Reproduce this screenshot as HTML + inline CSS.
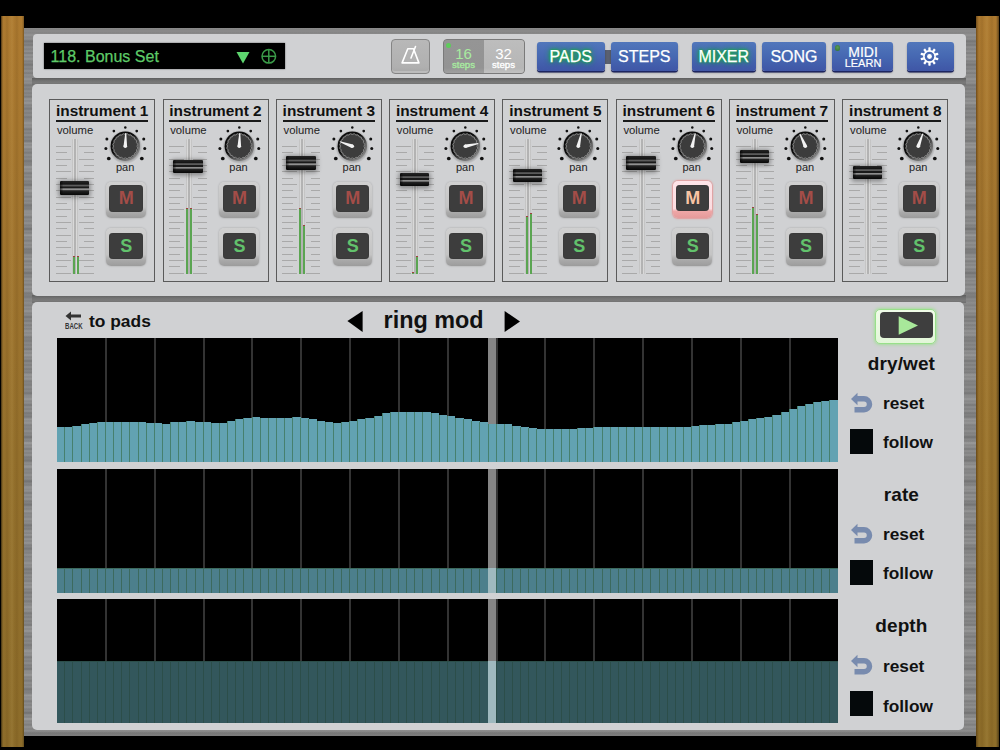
<!DOCTYPE html><html><head><meta charset="utf-8"><style>
*{margin:0;padding:0;box-sizing:border-box}
html,body{width:1000px;height:750px;overflow:hidden;background:#000}
body{position:relative;font-family:"Liberation Sans",sans-serif}
.a{position:absolute}
.wood{background:
 linear-gradient(90deg, rgba(0,0,0,.55) 0px, rgba(0,0,0,0) 2px, rgba(0,0,0,0) 4px, rgba(80,50,10,.12) 6px, rgba(0,0,0,0) 8px, rgba(255,230,160,.08) 11px, rgba(0,0,0,0) 13px, rgba(80,50,10,.12) 16px, rgba(0,0,0,0) 18px, rgba(0,0,0,0) 21px, rgba(0,0,0,.3) 23px),
 linear-gradient(180deg,#ad7a30 0%,#a0742e 30%,#94702c 60%,#8c6c2a 100%);}
.woodr{background:
 linear-gradient(90deg, rgba(40,20,0,.45) 0px, rgba(40,20,0,.2) 1.5px, rgba(0,0,0,0) 3px, rgba(80,50,10,.12) 6px, rgba(0,0,0,0) 8px, rgba(255,230,160,.08) 11px, rgba(0,0,0,0) 13px, rgba(80,50,10,.12) 16px, rgba(0,0,0,0) 18px, rgba(0,0,0,0) 20px, rgba(0,0,0,.45) 23px),
 linear-gradient(180deg,#ad7a30 0%,#a0742e 30%,#98722c 60%,#8e6e2a 100%);}
.metal{background:
 repeating-linear-gradient(180deg, rgba(0,0,0,0) 0px, rgba(0,0,0,.07) 1px, rgba(0,0,0,0) 2px, rgba(255,255,255,.05) 3px, rgba(0,0,0,0) 4px),
 repeating-linear-gradient(180deg, rgba(0,0,0,0) 0px, rgba(0,0,0,.07) 3px, rgba(0,0,0,0) 5px, rgba(255,255,255,.05) 9px, rgba(0,0,0,0) 11px),
 repeating-linear-gradient(180deg, rgba(255,255,255,.05) 0px, rgba(0,0,0,0) 8px, rgba(0,0,0,.08) 17px, rgba(0,0,0,0) 23px),#8a8a8a}
.pnl{background:#d0d1d3;border-radius:5px}
.box{border:1.5px solid #5a5a5a;}
.ttl{font-weight:bold;font-size:15px;color:#111;text-align:center;white-space:nowrap}
.uline{background:#1a1a1a;height:2.2px}
.sm{font-size:11px;color:#222;white-space:nowrap}
.tick{background:#a9a9a9;height:1.3px}
.btnb{border-radius:5px;background:linear-gradient(180deg,#d0d0d0,#c4c4c4 70%,#a9a9a9 85%,#9c9c9c);box-shadow:0 0 2px rgba(0,0,0,.25)}
.btnf{border-radius:4px;background:#3d3d3d;box-shadow:inset 0 0 1px #222;font-weight:bold;font-size:18px;text-align:center}
.blue{border-radius:3px;font-size:16px !important;-webkit-text-stroke:.25px #fff;background:linear-gradient(180deg,#5177bb 0%,#4668b2 50%,#3f56a6 100%);box-shadow:0 1.5px 0 #1d2560, 0 2px 2px rgba(0,0,0,.3);color:#fff;text-align:center;font-size:15px}
.gbar{position:absolute;background:#000}
.lbl{font-weight:bold;font-size:17px;color:#111;white-space:nowrap}
</style></head><body>
<div class="a wood" style="left:1px;top:16px;width:23px;height:731px"></div>
<div class="a woodr" style="left:976px;top:16px;width:23px;height:731px"></div>
<div class="a metal" style="left:24px;top:28px;width:952px;height:708px"></div>
<div class="a" style="left:32px;top:77.5px;width:934px;height:7px;background:linear-gradient(180deg,#5e5e5e,#737373 40%,#7a7a7a 70%,#6e6e6e)"></div>
<div class="a" style="left:32px;top:295px;width:934px;height:7.5px;background:linear-gradient(180deg,#5e5e5e,#737373 40%,#7a7a7a 70%,#6e6e6e)"></div>
<div class="a pnl" style="left:33px;top:34px;width:933px;height:44px;border-radius:4px"></div>
<div class="a pnl" style="left:32px;top:84px;width:933px;height:211.5px"></div>
<div class="a pnl" style="left:32px;top:302px;width:932px;height:428px"></div>
<div class="a" style="left:44px;top:43px;width:241px;height:25.5px;background:#000;box-shadow:0 0 1.5px rgba(0,0,0,.6)"></div>
<div class="a" style="left:50.6px;top:46.5px;font-size:16px;color:#5ecb68;white-space:nowrap;line-height:20px;-webkit-text-stroke:.25px #5ecb68">118. Bonus Set</div>
<svg class="a" style="left:230px;top:44px" width="55" height="24"><polygon points="6.5,8 19.5,8 13,19.5" fill="#5dd46e"/><circle cx="38.8" cy="12.3" r="6.8" fill="none" stroke="#3a9a48" stroke-width="1.5"/><line x1="32" y1="12.3" x2="45.6" y2="12.3" stroke="#3a9a48" stroke-width="1.5"/><line x1="38.8" y1="5.5" x2="38.8" y2="19.1" stroke="#3a9a48" stroke-width="1.5"/></svg>
<div class="a" style="left:391px;top:39px;width:39px;height:35px;border-radius:4px;background:linear-gradient(180deg,#b8b8b8,#b0b0b0 80%,#a8a8a8);border:1px solid #858585;box-shadow:inset 0 -2px 0 #bcbcbc"></div>
<svg class="a" style="left:391px;top:39px" width="39" height="35"><path d="M11.1,23.9 L16.8,9.8 L22.5,9.8 L27.9,23.9 Z" fill="none" stroke="#fff" stroke-width="1.6" stroke-linejoin="round"/><line x1="20" y1="19" x2="24.5" y2="7.5" stroke="#fff" stroke-width="1.6" stroke-linecap="round"/></svg>
<div class="a" style="left:442.5px;top:39px;width:82px;height:35px;border-radius:4px;background:#8a8a8a;border:1px solid #7a7a7a"></div>
<div class="a" style="left:443.5px;top:40px;width:40px;height:33px;border-radius:3px 0 0 3px;background:linear-gradient(180deg,#959595,#939393 85%,#a0a0a0)"></div>
<div class="a" style="left:483.5px;top:40px;width:40px;height:33px;border-radius:0 3px 3px 0;background:linear-gradient(180deg,#bdbdbd,#b6b6b6 85%,#c2c2c2)"></div>
<div class="a" style="left:446px;top:43px;width:5px;height:5px;border-radius:50%;background:#5dcc5a"></div>
<div class="a" style="left:443.5px;top:46px;width:40px;text-align:center;font-size:15px;line-height:15px;color:#a8eba0">16</div>
<div class="a" style="left:443.5px;top:59.5px;width:40px;text-align:center;font-size:9.6px;line-height:10px;color:#a8eba0;-webkit-text-stroke:.35px #a8eba0">steps</div>
<div class="a" style="left:483.5px;top:46px;width:40px;text-align:center;font-size:15px;line-height:15px;color:#fff">32</div>
<div class="a" style="left:483.5px;top:59.5px;width:40px;text-align:center;font-size:9.6px;line-height:10px;color:#fff;-webkit-text-stroke:.35px #fff">steps</div>
<div class="a" style="left:603px;top:49.5px;width:9px;height:14.5px;background:#5a6070"></div>
<div class="a blue" style="left:537px;top:42px;width:67.5px;height:28.5px;line-height:28.5px;padding-top:1.2px;text-shadow:0 0 2px #1aa84a,0 0 3px #1aa84a,0 0 5px #1aa84a,0 0 6px #1aa84a">PADS</div>
<div class="a blue" style="left:611px;top:42px;width:66.5px;height:28.5px;line-height:28.5px;padding-top:1.2px;">STEPS</div>
<div class="a blue" style="left:692px;top:42px;width:63.5px;height:28.5px;line-height:28.5px;padding-top:1.2px;text-shadow:0 0 2px #1aa84a,0 0 3px #1aa84a,0 0 5px #1aa84a,0 0 6px #1aa84a">MIXER</div>
<div class="a blue" style="left:762px;top:42px;width:64px;height:28.5px;line-height:28.5px;padding-top:1.2px;">SONG</div>
<div class="a blue" style="left:832px;top:42px;width:61px;height:28.5px"></div>
<div class="a" style="left:832.5px;top:44.55px;width:61px;text-align:center;color:#fff;font-size:14px;line-height:14px;-webkit-text-stroke:.2px #fff">MIDI</div>
<div class="a" style="left:832.5px;top:57.6px;width:61px;text-align:center;color:#fff;font-size:11px;line-height:11px;-webkit-text-stroke:.2px #fff">LEARN</div>
<div class="a" style="left:834.5px;top:45.2px;width:5.8px;height:5.8px;border-radius:50%;background:radial-gradient(circle at 50% 40%,#5a9a58,#2e7030)"></div>
<div class="a blue" style="left:907px;top:42px;width:47px;height:28.5px"></div>
<svg class="a" style="left:918.7px;top:45.5px" width="21" height="21"><g transform="translate(10.5,10.5)"><rect x="-1.15" y="-9.2" width="2.3" height="4" rx="0.6" fill="#fff" transform="rotate(0)"/><rect x="-1.15" y="-9.2" width="2.3" height="4" rx="0.6" fill="#fff" transform="rotate(36)"/><rect x="-1.15" y="-9.2" width="2.3" height="4" rx="0.6" fill="#fff" transform="rotate(72)"/><rect x="-1.15" y="-9.2" width="2.3" height="4" rx="0.6" fill="#fff" transform="rotate(108)"/><rect x="-1.15" y="-9.2" width="2.3" height="4" rx="0.6" fill="#fff" transform="rotate(144)"/><rect x="-1.15" y="-9.2" width="2.3" height="4" rx="0.6" fill="#fff" transform="rotate(180)"/><rect x="-1.15" y="-9.2" width="2.3" height="4" rx="0.6" fill="#fff" transform="rotate(216)"/><rect x="-1.15" y="-9.2" width="2.3" height="4" rx="0.6" fill="#fff" transform="rotate(252)"/><rect x="-1.15" y="-9.2" width="2.3" height="4" rx="0.6" fill="#fff" transform="rotate(288)"/><rect x="-1.15" y="-9.2" width="2.3" height="4" rx="0.6" fill="#fff" transform="rotate(324)"/><circle r="5.6" fill="none" stroke="#fff" stroke-width="1.6"/><circle r="2.4" fill="#fff"/></g></svg>
<div class="a box" style="left:49.20px;top:98.5px;width:106px;height:183.5px"></div>
<div class="a ttl" style="left:49.20px;top:101.6px;width:106px;line-height:17px;font-size:15.4px">instrument 1</div>
<div class="a uline" style="left:56.00px;top:119.9px;width:92px;height:1.9px"></div>
<div class="a sm" style="left:56.90px;top:124.4px;line-height:13px;font-size:11.3px">volume</div>
<div class="a" style="left:49.20px;top:98.5px;width:105px;height:183px"><div class="a tick" style="left:6.5px;top:47.00px;width:15px"></div><div class="a tick" style="left:30px;top:47.00px;width:14.5px"></div><div class="a tick" style="left:6.5px;top:53.50px;width:11px"></div><div class="a tick" style="left:35px;top:53.50px;width:9.5px"></div><div class="a tick" style="left:6.5px;top:60.00px;width:15px"></div><div class="a tick" style="left:30px;top:60.00px;width:14.5px"></div><div class="a tick" style="left:6.5px;top:66.00px;width:11px"></div><div class="a tick" style="left:35px;top:66.00px;width:9.5px"></div><div class="a tick" style="left:6.5px;top:72.50px;width:15px"></div><div class="a tick" style="left:30px;top:72.50px;width:14.5px"></div><div class="a tick" style="left:6.5px;top:79.00px;width:11px"></div><div class="a tick" style="left:35px;top:79.00px;width:9.5px"></div><div class="a tick" style="left:6.5px;top:85.00px;width:15px"></div><div class="a tick" style="left:30px;top:85.00px;width:14.5px"></div><div class="a tick" style="left:6.5px;top:91.50px;width:11px"></div><div class="a tick" style="left:35px;top:91.50px;width:9.5px"></div><div class="a tick" style="left:6.5px;top:98.00px;width:15px"></div><div class="a tick" style="left:30px;top:98.00px;width:14.5px"></div><div class="a tick" style="left:6.5px;top:104.00px;width:11px"></div><div class="a tick" style="left:35px;top:104.00px;width:9.5px"></div><div class="a tick" style="left:6.5px;top:110.50px;width:15px"></div><div class="a tick" style="left:30px;top:110.50px;width:14.5px"></div><div class="a tick" style="left:6.5px;top:117.00px;width:11px"></div><div class="a tick" style="left:35px;top:117.00px;width:9.5px"></div><div class="a tick" style="left:6.5px;top:123.00px;width:15px"></div><div class="a tick" style="left:30px;top:123.00px;width:14.5px"></div><div class="a tick" style="left:6.5px;top:129.50px;width:11px"></div><div class="a tick" style="left:35px;top:129.50px;width:9.5px"></div><div class="a tick" style="left:6.5px;top:136.00px;width:15px"></div><div class="a tick" style="left:30px;top:136.00px;width:14.5px"></div><div class="a tick" style="left:6.5px;top:142.50px;width:11px"></div><div class="a tick" style="left:35px;top:142.50px;width:9.5px"></div><div class="a tick" style="left:6.5px;top:148.50px;width:15px"></div><div class="a tick" style="left:30px;top:148.50px;width:14.5px"></div><div class="a tick" style="left:6.5px;top:155.00px;width:11px"></div><div class="a tick" style="left:35px;top:155.00px;width:9.5px"></div><div class="a tick" style="left:6.5px;top:161.50px;width:15px"></div><div class="a tick" style="left:30px;top:161.50px;width:14.5px"></div><div class="a tick" style="left:6.5px;top:167.50px;width:11px"></div><div class="a tick" style="left:35px;top:167.50px;width:9.5px"></div><div class="a tick" style="left:6.5px;top:174.00px;width:15px"></div><div class="a tick" style="left:30px;top:174.00px;width:14.5px"></div>
<div class="a" style="left:23px;top:40.5px;width:6px;height:135px;background:linear-gradient(90deg,#b4b4b4 0,#dcdcdc 20%,#cfcfcf 40%,#7a7a7a 45%,#7a7a7a 55%,#cfcfcf 60%,#dcdcdc 80%,#b4b4b4 100%);border-radius:1px"></div>
<div class="a" style="left:23.80px;top:157.50px;width:2px;height:17.60px;background:#5ba552;border-top:1px solid #a04040"></div>
<div class="a" style="left:27.80px;top:157.50px;width:2px;height:17.60px;background:#5ba552;border-top:1px solid #a04040"></div>
<div class="a" style="left:10.5px;top:82.80px;width:29.5px;height:13.4px;border-radius:1px;background:linear-gradient(90deg,rgba(0,0,0,.6) 0,rgba(0,0,0,0) 12%),linear-gradient(180deg,#252525 0,#161616 20%,#1c1c1c 24%,#5e5e5e 28%,#5a5a5a 36%,#1a1a1a 42%,#1a1a1a 50%,#8a8a8a 55%,#939393 63%,#252525 69%,#141414 85%,#080808 100%);box-shadow:0 1px 4px 1.5px rgba(0,0,0,.35)"></div>
<svg class="a" style="left:0;top:0" width="105" height="183"><defs><linearGradient id="kg0" x1="0.15" y1="0.1" x2="0.85" y2="0.9"><stop offset="0.4" stop-color="#0c0c0c"/><stop offset="0.72" stop-color="#606060"/><stop offset="1" stop-color="#8a8a8a"/></linearGradient><radialGradient id="ks0"><stop offset="0.8" stop-color="rgba(0,0,0,.25)"/><stop offset="1" stop-color="rgba(0,0,0,0)"/></radialGradient></defs><circle cx="59.78" cy="59.51" r="1.85" fill="#111"/><circle cx="56.85" cy="49.59" r="1.5" fill="#111"/><circle cx="57.87" cy="39.98" r="1.5" fill="#111"/><circle cx="64.87" cy="32.03" r="1.35" fill="#111"/><circle cx="76.30" cy="28.60" r="1.25" fill="#111"/><circle cx="87.73" cy="32.03" r="1.35" fill="#111"/><circle cx="94.73" cy="39.98" r="1.5" fill="#111"/><circle cx="95.75" cy="49.59" r="1.5" fill="#111"/><circle cx="92.82" cy="59.51" r="1.85" fill="#111"/>
<circle cx="76.3" cy="48.0" r="17" fill="url(#ks0)"/>
<circle cx="76.3" cy="47.2" r="14.7" fill="url(#kg0)"/>
<circle cx="76.3" cy="47.2" r="12.7" fill="#3c3c3c"/>
<polygon points="88.00,47.20 88.84,49.19 87.43,50.82 87.62,52.97 85.77,54.08 85.28,56.18 83.18,56.67 82.07,58.52 79.92,58.33 78.29,59.74 76.30,58.90 74.31,59.74 72.68,58.33 70.53,58.52 69.42,56.67 67.32,56.18 66.83,54.08 64.98,52.97 65.17,50.82 63.76,49.19 64.60,47.20 63.76,45.21 65.17,43.58 64.98,41.43 66.83,40.32 67.32,38.22 69.42,37.73 70.53,35.88 72.68,36.07 74.31,34.66 76.30,35.50 78.29,34.66 79.92,36.07 82.07,35.88 83.18,37.73 85.28,38.22 85.77,40.32 87.62,41.43 87.43,43.58 88.84,45.21" fill="none" stroke="#858585" stroke-width="1"/>
<polygon points="74.5,47.2 78.1,47.2 76.8,33.900000000000006 75.8,33.900000000000006" fill="#f2f2f2" transform="rotate(2 76.3 47.2)"/>
<circle cx="76.3" cy="47.2" r="1.8" fill="#f2f2f2"/></svg>
<div class="a sm" style="left:61px;top:62.5px;width:30px;text-align:center;line-height:13px">pan</div>
<div class="a btnb" style="left:56.8px;top:83.5px;width:39.8px;height:36px"></div>
<div class="a btnf" style="left:60.3px;top:86.5px;width:33.3px;height:26.5px;line-height:26.5px;color:#a44d48">M</div>
<div class="a btnb" style="left:56.8px;top:129.5px;width:39.8px;height:37.5px"></div>
<div class="a btnf" style="left:60.3px;top:134px;width:33.3px;height:26.7px;line-height:26.7px;color:#62c26c">S</div>
</div>
<div class="a box" style="left:162.50px;top:98.5px;width:106px;height:183.5px"></div>
<div class="a ttl" style="left:162.50px;top:101.6px;width:106px;line-height:17px;font-size:15.4px">instrument 2</div>
<div class="a uline" style="left:169.30px;top:119.9px;width:92px;height:1.9px"></div>
<div class="a sm" style="left:170.20px;top:124.4px;line-height:13px;font-size:11.3px">volume</div>
<div class="a" style="left:162.50px;top:98.5px;width:105px;height:183px"><div class="a tick" style="left:6.5px;top:47.00px;width:15px"></div><div class="a tick" style="left:30px;top:47.00px;width:14.5px"></div><div class="a tick" style="left:6.5px;top:53.50px;width:11px"></div><div class="a tick" style="left:35px;top:53.50px;width:9.5px"></div><div class="a tick" style="left:6.5px;top:60.00px;width:15px"></div><div class="a tick" style="left:30px;top:60.00px;width:14.5px"></div><div class="a tick" style="left:6.5px;top:66.00px;width:11px"></div><div class="a tick" style="left:35px;top:66.00px;width:9.5px"></div><div class="a tick" style="left:6.5px;top:72.50px;width:15px"></div><div class="a tick" style="left:30px;top:72.50px;width:14.5px"></div><div class="a tick" style="left:6.5px;top:79.00px;width:11px"></div><div class="a tick" style="left:35px;top:79.00px;width:9.5px"></div><div class="a tick" style="left:6.5px;top:85.00px;width:15px"></div><div class="a tick" style="left:30px;top:85.00px;width:14.5px"></div><div class="a tick" style="left:6.5px;top:91.50px;width:11px"></div><div class="a tick" style="left:35px;top:91.50px;width:9.5px"></div><div class="a tick" style="left:6.5px;top:98.00px;width:15px"></div><div class="a tick" style="left:30px;top:98.00px;width:14.5px"></div><div class="a tick" style="left:6.5px;top:104.00px;width:11px"></div><div class="a tick" style="left:35px;top:104.00px;width:9.5px"></div><div class="a tick" style="left:6.5px;top:110.50px;width:15px"></div><div class="a tick" style="left:30px;top:110.50px;width:14.5px"></div><div class="a tick" style="left:6.5px;top:117.00px;width:11px"></div><div class="a tick" style="left:35px;top:117.00px;width:9.5px"></div><div class="a tick" style="left:6.5px;top:123.00px;width:15px"></div><div class="a tick" style="left:30px;top:123.00px;width:14.5px"></div><div class="a tick" style="left:6.5px;top:129.50px;width:11px"></div><div class="a tick" style="left:35px;top:129.50px;width:9.5px"></div><div class="a tick" style="left:6.5px;top:136.00px;width:15px"></div><div class="a tick" style="left:30px;top:136.00px;width:14.5px"></div><div class="a tick" style="left:6.5px;top:142.50px;width:11px"></div><div class="a tick" style="left:35px;top:142.50px;width:9.5px"></div><div class="a tick" style="left:6.5px;top:148.50px;width:15px"></div><div class="a tick" style="left:30px;top:148.50px;width:14.5px"></div><div class="a tick" style="left:6.5px;top:155.00px;width:11px"></div><div class="a tick" style="left:35px;top:155.00px;width:9.5px"></div><div class="a tick" style="left:6.5px;top:161.50px;width:15px"></div><div class="a tick" style="left:30px;top:161.50px;width:14.5px"></div><div class="a tick" style="left:6.5px;top:167.50px;width:11px"></div><div class="a tick" style="left:35px;top:167.50px;width:9.5px"></div><div class="a tick" style="left:6.5px;top:174.00px;width:15px"></div><div class="a tick" style="left:30px;top:174.00px;width:14.5px"></div>
<div class="a" style="left:23px;top:40.5px;width:6px;height:135px;background:linear-gradient(90deg,#b4b4b4 0,#dcdcdc 20%,#cfcfcf 40%,#7a7a7a 45%,#7a7a7a 55%,#cfcfcf 60%,#dcdcdc 80%,#b4b4b4 100%);border-radius:1px"></div>
<div class="a" style="left:23.50px;top:109.50px;width:2px;height:65.60px;background:#5ba552;border-top:1px solid #a04040"></div>
<div class="a" style="left:27.50px;top:109.50px;width:2px;height:65.60px;background:#5ba552;border-top:1px solid #a04040"></div>
<div class="a" style="left:10.5px;top:61.30px;width:29.5px;height:13.4px;border-radius:1px;background:linear-gradient(90deg,rgba(0,0,0,.6) 0,rgba(0,0,0,0) 12%),linear-gradient(180deg,#252525 0,#161616 20%,#1c1c1c 24%,#5e5e5e 28%,#5a5a5a 36%,#1a1a1a 42%,#1a1a1a 50%,#8a8a8a 55%,#939393 63%,#252525 69%,#141414 85%,#080808 100%);box-shadow:0 1px 4px 1.5px rgba(0,0,0,.35)"></div>
<svg class="a" style="left:0;top:0" width="105" height="183"><defs><linearGradient id="kg1" x1="0.15" y1="0.1" x2="0.85" y2="0.9"><stop offset="0.4" stop-color="#0c0c0c"/><stop offset="0.72" stop-color="#606060"/><stop offset="1" stop-color="#8a8a8a"/></linearGradient><radialGradient id="ks1"><stop offset="0.8" stop-color="rgba(0,0,0,.25)"/><stop offset="1" stop-color="rgba(0,0,0,0)"/></radialGradient></defs><circle cx="59.78" cy="59.51" r="1.85" fill="#111"/><circle cx="56.85" cy="49.59" r="1.5" fill="#111"/><circle cx="57.87" cy="39.98" r="1.5" fill="#111"/><circle cx="64.87" cy="32.03" r="1.35" fill="#111"/><circle cx="76.30" cy="28.60" r="1.25" fill="#111"/><circle cx="87.73" cy="32.03" r="1.35" fill="#111"/><circle cx="94.73" cy="39.98" r="1.5" fill="#111"/><circle cx="95.75" cy="49.59" r="1.5" fill="#111"/><circle cx="92.82" cy="59.51" r="1.85" fill="#111"/>
<circle cx="76.3" cy="48.0" r="17" fill="url(#ks1)"/>
<circle cx="76.3" cy="47.2" r="14.7" fill="url(#kg1)"/>
<circle cx="76.3" cy="47.2" r="12.7" fill="#3c3c3c"/>
<polygon points="88.00,47.20 88.84,49.19 87.43,50.82 87.62,52.97 85.77,54.08 85.28,56.18 83.18,56.67 82.07,58.52 79.92,58.33 78.29,59.74 76.30,58.90 74.31,59.74 72.68,58.33 70.53,58.52 69.42,56.67 67.32,56.18 66.83,54.08 64.98,52.97 65.17,50.82 63.76,49.19 64.60,47.20 63.76,45.21 65.17,43.58 64.98,41.43 66.83,40.32 67.32,38.22 69.42,37.73 70.53,35.88 72.68,36.07 74.31,34.66 76.30,35.50 78.29,34.66 79.92,36.07 82.07,35.88 83.18,37.73 85.28,38.22 85.77,40.32 87.62,41.43 87.43,43.58 88.84,45.21" fill="none" stroke="#858585" stroke-width="1"/>
<polygon points="74.5,47.2 78.1,47.2 76.8,33.900000000000006 75.8,33.900000000000006" fill="#f2f2f2" transform="rotate(2 76.3 47.2)"/>
<circle cx="76.3" cy="47.2" r="1.8" fill="#f2f2f2"/></svg>
<div class="a sm" style="left:61px;top:62.5px;width:30px;text-align:center;line-height:13px">pan</div>
<div class="a btnb" style="left:56.8px;top:83.5px;width:39.8px;height:36px"></div>
<div class="a btnf" style="left:60.3px;top:86.5px;width:33.3px;height:26.5px;line-height:26.5px;color:#a44d48">M</div>
<div class="a btnb" style="left:56.8px;top:129.5px;width:39.8px;height:37.5px"></div>
<div class="a btnf" style="left:60.3px;top:134px;width:33.3px;height:26.7px;line-height:26.7px;color:#62c26c">S</div>
</div>
<div class="a box" style="left:275.80px;top:98.5px;width:106px;height:183.5px"></div>
<div class="a ttl" style="left:275.80px;top:101.6px;width:106px;line-height:17px;font-size:15.4px">instrument 3</div>
<div class="a uline" style="left:282.60px;top:119.9px;width:92px;height:1.9px"></div>
<div class="a sm" style="left:283.50px;top:124.4px;line-height:13px;font-size:11.3px">volume</div>
<div class="a" style="left:275.80px;top:98.5px;width:105px;height:183px"><div class="a tick" style="left:6.5px;top:47.00px;width:15px"></div><div class="a tick" style="left:30px;top:47.00px;width:14.5px"></div><div class="a tick" style="left:6.5px;top:53.50px;width:11px"></div><div class="a tick" style="left:35px;top:53.50px;width:9.5px"></div><div class="a tick" style="left:6.5px;top:60.00px;width:15px"></div><div class="a tick" style="left:30px;top:60.00px;width:14.5px"></div><div class="a tick" style="left:6.5px;top:66.00px;width:11px"></div><div class="a tick" style="left:35px;top:66.00px;width:9.5px"></div><div class="a tick" style="left:6.5px;top:72.50px;width:15px"></div><div class="a tick" style="left:30px;top:72.50px;width:14.5px"></div><div class="a tick" style="left:6.5px;top:79.00px;width:11px"></div><div class="a tick" style="left:35px;top:79.00px;width:9.5px"></div><div class="a tick" style="left:6.5px;top:85.00px;width:15px"></div><div class="a tick" style="left:30px;top:85.00px;width:14.5px"></div><div class="a tick" style="left:6.5px;top:91.50px;width:11px"></div><div class="a tick" style="left:35px;top:91.50px;width:9.5px"></div><div class="a tick" style="left:6.5px;top:98.00px;width:15px"></div><div class="a tick" style="left:30px;top:98.00px;width:14.5px"></div><div class="a tick" style="left:6.5px;top:104.00px;width:11px"></div><div class="a tick" style="left:35px;top:104.00px;width:9.5px"></div><div class="a tick" style="left:6.5px;top:110.50px;width:15px"></div><div class="a tick" style="left:30px;top:110.50px;width:14.5px"></div><div class="a tick" style="left:6.5px;top:117.00px;width:11px"></div><div class="a tick" style="left:35px;top:117.00px;width:9.5px"></div><div class="a tick" style="left:6.5px;top:123.00px;width:15px"></div><div class="a tick" style="left:30px;top:123.00px;width:14.5px"></div><div class="a tick" style="left:6.5px;top:129.50px;width:11px"></div><div class="a tick" style="left:35px;top:129.50px;width:9.5px"></div><div class="a tick" style="left:6.5px;top:136.00px;width:15px"></div><div class="a tick" style="left:30px;top:136.00px;width:14.5px"></div><div class="a tick" style="left:6.5px;top:142.50px;width:11px"></div><div class="a tick" style="left:35px;top:142.50px;width:9.5px"></div><div class="a tick" style="left:6.5px;top:148.50px;width:15px"></div><div class="a tick" style="left:30px;top:148.50px;width:14.5px"></div><div class="a tick" style="left:6.5px;top:155.00px;width:11px"></div><div class="a tick" style="left:35px;top:155.00px;width:9.5px"></div><div class="a tick" style="left:6.5px;top:161.50px;width:15px"></div><div class="a tick" style="left:30px;top:161.50px;width:14.5px"></div><div class="a tick" style="left:6.5px;top:167.50px;width:11px"></div><div class="a tick" style="left:35px;top:167.50px;width:9.5px"></div><div class="a tick" style="left:6.5px;top:174.00px;width:15px"></div><div class="a tick" style="left:30px;top:174.00px;width:14.5px"></div>
<div class="a" style="left:23px;top:40.5px;width:6px;height:135px;background:linear-gradient(90deg,#b4b4b4 0,#dcdcdc 20%,#cfcfcf 40%,#7a7a7a 45%,#7a7a7a 55%,#cfcfcf 60%,#dcdcdc 80%,#b4b4b4 100%);border-radius:1px"></div>
<div class="a" style="left:23.20px;top:109.50px;width:2px;height:65.60px;background:#5ba552;border-top:1px solid #a04040"></div>
<div class="a" style="left:27.20px;top:126.20px;width:2px;height:48.90px;background:#5ba552;border-top:1px solid #a04040"></div>
<div class="a" style="left:10.5px;top:57.80px;width:29.5px;height:13.4px;border-radius:1px;background:linear-gradient(90deg,rgba(0,0,0,.6) 0,rgba(0,0,0,0) 12%),linear-gradient(180deg,#252525 0,#161616 20%,#1c1c1c 24%,#5e5e5e 28%,#5a5a5a 36%,#1a1a1a 42%,#1a1a1a 50%,#8a8a8a 55%,#939393 63%,#252525 69%,#141414 85%,#080808 100%);box-shadow:0 1px 4px 1.5px rgba(0,0,0,.35)"></div>
<svg class="a" style="left:0;top:0" width="105" height="183"><defs><linearGradient id="kg2" x1="0.15" y1="0.1" x2="0.85" y2="0.9"><stop offset="0.4" stop-color="#0c0c0c"/><stop offset="0.72" stop-color="#606060"/><stop offset="1" stop-color="#8a8a8a"/></linearGradient><radialGradient id="ks2"><stop offset="0.8" stop-color="rgba(0,0,0,.25)"/><stop offset="1" stop-color="rgba(0,0,0,0)"/></radialGradient></defs><circle cx="59.78" cy="59.51" r="1.85" fill="#111"/><circle cx="56.85" cy="49.59" r="1.5" fill="#111"/><circle cx="57.87" cy="39.98" r="1.5" fill="#111"/><circle cx="64.87" cy="32.03" r="1.35" fill="#111"/><circle cx="76.30" cy="28.60" r="1.25" fill="#111"/><circle cx="87.73" cy="32.03" r="1.35" fill="#111"/><circle cx="94.73" cy="39.98" r="1.5" fill="#111"/><circle cx="95.75" cy="49.59" r="1.5" fill="#111"/><circle cx="92.82" cy="59.51" r="1.85" fill="#111"/>
<circle cx="76.3" cy="48.0" r="17" fill="url(#ks2)"/>
<circle cx="76.3" cy="47.2" r="14.7" fill="url(#kg2)"/>
<circle cx="76.3" cy="47.2" r="12.7" fill="#3c3c3c"/>
<polygon points="88.00,47.20 88.84,49.19 87.43,50.82 87.62,52.97 85.77,54.08 85.28,56.18 83.18,56.67 82.07,58.52 79.92,58.33 78.29,59.74 76.30,58.90 74.31,59.74 72.68,58.33 70.53,58.52 69.42,56.67 67.32,56.18 66.83,54.08 64.98,52.97 65.17,50.82 63.76,49.19 64.60,47.20 63.76,45.21 65.17,43.58 64.98,41.43 66.83,40.32 67.32,38.22 69.42,37.73 70.53,35.88 72.68,36.07 74.31,34.66 76.30,35.50 78.29,34.66 79.92,36.07 82.07,35.88 83.18,37.73 85.28,38.22 85.77,40.32 87.62,41.43 87.43,43.58 88.84,45.21" fill="none" stroke="#858585" stroke-width="1"/>
<polygon points="74.5,47.2 78.1,47.2 76.8,33.900000000000006 75.8,33.900000000000006" fill="#f2f2f2" transform="rotate(-70 76.3 47.2)"/>
<circle cx="76.3" cy="47.2" r="1.8" fill="#f2f2f2"/></svg>
<div class="a sm" style="left:61px;top:62.5px;width:30px;text-align:center;line-height:13px">pan</div>
<div class="a btnb" style="left:56.8px;top:83.5px;width:39.8px;height:36px"></div>
<div class="a btnf" style="left:60.3px;top:86.5px;width:33.3px;height:26.5px;line-height:26.5px;color:#a44d48">M</div>
<div class="a btnb" style="left:56.8px;top:129.5px;width:39.8px;height:37.5px"></div>
<div class="a btnf" style="left:60.3px;top:134px;width:33.3px;height:26.7px;line-height:26.7px;color:#62c26c">S</div>
</div>
<div class="a box" style="left:389.10px;top:98.5px;width:106px;height:183.5px"></div>
<div class="a ttl" style="left:389.10px;top:101.6px;width:106px;line-height:17px;font-size:15.4px">instrument 4</div>
<div class="a uline" style="left:395.90px;top:119.9px;width:92px;height:1.9px"></div>
<div class="a sm" style="left:396.80px;top:124.4px;line-height:13px;font-size:11.3px">volume</div>
<div class="a" style="left:389.10px;top:98.5px;width:105px;height:183px"><div class="a tick" style="left:6.5px;top:47.00px;width:15px"></div><div class="a tick" style="left:30px;top:47.00px;width:14.5px"></div><div class="a tick" style="left:6.5px;top:53.50px;width:11px"></div><div class="a tick" style="left:35px;top:53.50px;width:9.5px"></div><div class="a tick" style="left:6.5px;top:60.00px;width:15px"></div><div class="a tick" style="left:30px;top:60.00px;width:14.5px"></div><div class="a tick" style="left:6.5px;top:66.00px;width:11px"></div><div class="a tick" style="left:35px;top:66.00px;width:9.5px"></div><div class="a tick" style="left:6.5px;top:72.50px;width:15px"></div><div class="a tick" style="left:30px;top:72.50px;width:14.5px"></div><div class="a tick" style="left:6.5px;top:79.00px;width:11px"></div><div class="a tick" style="left:35px;top:79.00px;width:9.5px"></div><div class="a tick" style="left:6.5px;top:85.00px;width:15px"></div><div class="a tick" style="left:30px;top:85.00px;width:14.5px"></div><div class="a tick" style="left:6.5px;top:91.50px;width:11px"></div><div class="a tick" style="left:35px;top:91.50px;width:9.5px"></div><div class="a tick" style="left:6.5px;top:98.00px;width:15px"></div><div class="a tick" style="left:30px;top:98.00px;width:14.5px"></div><div class="a tick" style="left:6.5px;top:104.00px;width:11px"></div><div class="a tick" style="left:35px;top:104.00px;width:9.5px"></div><div class="a tick" style="left:6.5px;top:110.50px;width:15px"></div><div class="a tick" style="left:30px;top:110.50px;width:14.5px"></div><div class="a tick" style="left:6.5px;top:117.00px;width:11px"></div><div class="a tick" style="left:35px;top:117.00px;width:9.5px"></div><div class="a tick" style="left:6.5px;top:123.00px;width:15px"></div><div class="a tick" style="left:30px;top:123.00px;width:14.5px"></div><div class="a tick" style="left:6.5px;top:129.50px;width:11px"></div><div class="a tick" style="left:35px;top:129.50px;width:9.5px"></div><div class="a tick" style="left:6.5px;top:136.00px;width:15px"></div><div class="a tick" style="left:30px;top:136.00px;width:14.5px"></div><div class="a tick" style="left:6.5px;top:142.50px;width:11px"></div><div class="a tick" style="left:35px;top:142.50px;width:9.5px"></div><div class="a tick" style="left:6.5px;top:148.50px;width:15px"></div><div class="a tick" style="left:30px;top:148.50px;width:14.5px"></div><div class="a tick" style="left:6.5px;top:155.00px;width:11px"></div><div class="a tick" style="left:35px;top:155.00px;width:9.5px"></div><div class="a tick" style="left:6.5px;top:161.50px;width:15px"></div><div class="a tick" style="left:30px;top:161.50px;width:14.5px"></div><div class="a tick" style="left:6.5px;top:167.50px;width:11px"></div><div class="a tick" style="left:35px;top:167.50px;width:9.5px"></div><div class="a tick" style="left:6.5px;top:174.00px;width:15px"></div><div class="a tick" style="left:30px;top:174.00px;width:14.5px"></div>
<div class="a" style="left:23px;top:40.5px;width:6px;height:135px;background:linear-gradient(90deg,#b4b4b4 0,#dcdcdc 20%,#cfcfcf 40%,#7a7a7a 45%,#7a7a7a 55%,#cfcfcf 60%,#dcdcdc 80%,#b4b4b4 100%);border-radius:1px"></div>
<div class="a" style="left:22.90px;top:173.00px;width:2px;height:2.10px;background:#5ba552;border-top:1px solid #a04040"></div>
<div class="a" style="left:26.90px;top:157.50px;width:2px;height:17.60px;background:#5ba552;border-top:1px solid #a04040"></div>
<div class="a" style="left:10.5px;top:74.30px;width:29.5px;height:13.4px;border-radius:1px;background:linear-gradient(90deg,rgba(0,0,0,.6) 0,rgba(0,0,0,0) 12%),linear-gradient(180deg,#252525 0,#161616 20%,#1c1c1c 24%,#5e5e5e 28%,#5a5a5a 36%,#1a1a1a 42%,#1a1a1a 50%,#8a8a8a 55%,#939393 63%,#252525 69%,#141414 85%,#080808 100%);box-shadow:0 1px 4px 1.5px rgba(0,0,0,.35)"></div>
<svg class="a" style="left:0;top:0" width="105" height="183"><defs><linearGradient id="kg3" x1="0.15" y1="0.1" x2="0.85" y2="0.9"><stop offset="0.4" stop-color="#0c0c0c"/><stop offset="0.72" stop-color="#606060"/><stop offset="1" stop-color="#8a8a8a"/></linearGradient><radialGradient id="ks3"><stop offset="0.8" stop-color="rgba(0,0,0,.25)"/><stop offset="1" stop-color="rgba(0,0,0,0)"/></radialGradient></defs><circle cx="59.78" cy="59.51" r="1.85" fill="#111"/><circle cx="56.85" cy="49.59" r="1.5" fill="#111"/><circle cx="57.87" cy="39.98" r="1.5" fill="#111"/><circle cx="64.87" cy="32.03" r="1.35" fill="#111"/><circle cx="76.30" cy="28.60" r="1.25" fill="#111"/><circle cx="87.73" cy="32.03" r="1.35" fill="#111"/><circle cx="94.73" cy="39.98" r="1.5" fill="#111"/><circle cx="95.75" cy="49.59" r="1.5" fill="#111"/><circle cx="92.82" cy="59.51" r="1.85" fill="#111"/>
<circle cx="76.3" cy="48.0" r="17" fill="url(#ks3)"/>
<circle cx="76.3" cy="47.2" r="14.7" fill="url(#kg3)"/>
<circle cx="76.3" cy="47.2" r="12.7" fill="#3c3c3c"/>
<polygon points="88.00,47.20 88.84,49.19 87.43,50.82 87.62,52.97 85.77,54.08 85.28,56.18 83.18,56.67 82.07,58.52 79.92,58.33 78.29,59.74 76.30,58.90 74.31,59.74 72.68,58.33 70.53,58.52 69.42,56.67 67.32,56.18 66.83,54.08 64.98,52.97 65.17,50.82 63.76,49.19 64.60,47.20 63.76,45.21 65.17,43.58 64.98,41.43 66.83,40.32 67.32,38.22 69.42,37.73 70.53,35.88 72.68,36.07 74.31,34.66 76.30,35.50 78.29,34.66 79.92,36.07 82.07,35.88 83.18,37.73 85.28,38.22 85.77,40.32 87.62,41.43 87.43,43.58 88.84,45.21" fill="none" stroke="#858585" stroke-width="1"/>
<polygon points="74.5,47.2 78.1,47.2 76.8,33.900000000000006 75.8,33.900000000000006" fill="#f2f2f2" transform="rotate(78 76.3 47.2)"/>
<circle cx="76.3" cy="47.2" r="1.8" fill="#f2f2f2"/></svg>
<div class="a sm" style="left:61px;top:62.5px;width:30px;text-align:center;line-height:13px">pan</div>
<div class="a btnb" style="left:56.8px;top:83.5px;width:39.8px;height:36px"></div>
<div class="a btnf" style="left:60.3px;top:86.5px;width:33.3px;height:26.5px;line-height:26.5px;color:#a44d48">M</div>
<div class="a btnb" style="left:56.8px;top:129.5px;width:39.8px;height:37.5px"></div>
<div class="a btnf" style="left:60.3px;top:134px;width:33.3px;height:26.7px;line-height:26.7px;color:#62c26c">S</div>
</div>
<div class="a box" style="left:502.40px;top:98.5px;width:106px;height:183.5px"></div>
<div class="a ttl" style="left:502.40px;top:101.6px;width:106px;line-height:17px;font-size:15.4px">instrument 5</div>
<div class="a uline" style="left:509.20px;top:119.9px;width:92px;height:1.9px"></div>
<div class="a sm" style="left:510.10px;top:124.4px;line-height:13px;font-size:11.3px">volume</div>
<div class="a" style="left:502.40px;top:98.5px;width:105px;height:183px"><div class="a tick" style="left:6.5px;top:47.00px;width:15px"></div><div class="a tick" style="left:30px;top:47.00px;width:14.5px"></div><div class="a tick" style="left:6.5px;top:53.50px;width:11px"></div><div class="a tick" style="left:35px;top:53.50px;width:9.5px"></div><div class="a tick" style="left:6.5px;top:60.00px;width:15px"></div><div class="a tick" style="left:30px;top:60.00px;width:14.5px"></div><div class="a tick" style="left:6.5px;top:66.00px;width:11px"></div><div class="a tick" style="left:35px;top:66.00px;width:9.5px"></div><div class="a tick" style="left:6.5px;top:72.50px;width:15px"></div><div class="a tick" style="left:30px;top:72.50px;width:14.5px"></div><div class="a tick" style="left:6.5px;top:79.00px;width:11px"></div><div class="a tick" style="left:35px;top:79.00px;width:9.5px"></div><div class="a tick" style="left:6.5px;top:85.00px;width:15px"></div><div class="a tick" style="left:30px;top:85.00px;width:14.5px"></div><div class="a tick" style="left:6.5px;top:91.50px;width:11px"></div><div class="a tick" style="left:35px;top:91.50px;width:9.5px"></div><div class="a tick" style="left:6.5px;top:98.00px;width:15px"></div><div class="a tick" style="left:30px;top:98.00px;width:14.5px"></div><div class="a tick" style="left:6.5px;top:104.00px;width:11px"></div><div class="a tick" style="left:35px;top:104.00px;width:9.5px"></div><div class="a tick" style="left:6.5px;top:110.50px;width:15px"></div><div class="a tick" style="left:30px;top:110.50px;width:14.5px"></div><div class="a tick" style="left:6.5px;top:117.00px;width:11px"></div><div class="a tick" style="left:35px;top:117.00px;width:9.5px"></div><div class="a tick" style="left:6.5px;top:123.00px;width:15px"></div><div class="a tick" style="left:30px;top:123.00px;width:14.5px"></div><div class="a tick" style="left:6.5px;top:129.50px;width:11px"></div><div class="a tick" style="left:35px;top:129.50px;width:9.5px"></div><div class="a tick" style="left:6.5px;top:136.00px;width:15px"></div><div class="a tick" style="left:30px;top:136.00px;width:14.5px"></div><div class="a tick" style="left:6.5px;top:142.50px;width:11px"></div><div class="a tick" style="left:35px;top:142.50px;width:9.5px"></div><div class="a tick" style="left:6.5px;top:148.50px;width:15px"></div><div class="a tick" style="left:30px;top:148.50px;width:14.5px"></div><div class="a tick" style="left:6.5px;top:155.00px;width:11px"></div><div class="a tick" style="left:35px;top:155.00px;width:9.5px"></div><div class="a tick" style="left:6.5px;top:161.50px;width:15px"></div><div class="a tick" style="left:30px;top:161.50px;width:14.5px"></div><div class="a tick" style="left:6.5px;top:167.50px;width:11px"></div><div class="a tick" style="left:35px;top:167.50px;width:9.5px"></div><div class="a tick" style="left:6.5px;top:174.00px;width:15px"></div><div class="a tick" style="left:30px;top:174.00px;width:14.5px"></div>
<div class="a" style="left:23px;top:40.5px;width:6px;height:135px;background:linear-gradient(90deg,#b4b4b4 0,#dcdcdc 20%,#cfcfcf 40%,#7a7a7a 45%,#7a7a7a 55%,#cfcfcf 60%,#dcdcdc 80%,#b4b4b4 100%);border-radius:1px"></div>
<div class="a" style="left:23.60px;top:117.50px;width:2px;height:57.60px;background:#5ba552;border-top:1px solid #a04040"></div>
<div class="a" style="left:27.60px;top:114.50px;width:2px;height:60.60px;background:#5ba552;border-top:1px solid #a04040"></div>
<div class="a" style="left:10.5px;top:70.10px;width:29.5px;height:13.4px;border-radius:1px;background:linear-gradient(90deg,rgba(0,0,0,.6) 0,rgba(0,0,0,0) 12%),linear-gradient(180deg,#252525 0,#161616 20%,#1c1c1c 24%,#5e5e5e 28%,#5a5a5a 36%,#1a1a1a 42%,#1a1a1a 50%,#8a8a8a 55%,#939393 63%,#252525 69%,#141414 85%,#080808 100%);box-shadow:0 1px 4px 1.5px rgba(0,0,0,.35)"></div>
<svg class="a" style="left:0;top:0" width="105" height="183"><defs><linearGradient id="kg4" x1="0.15" y1="0.1" x2="0.85" y2="0.9"><stop offset="0.4" stop-color="#0c0c0c"/><stop offset="0.72" stop-color="#606060"/><stop offset="1" stop-color="#8a8a8a"/></linearGradient><radialGradient id="ks4"><stop offset="0.8" stop-color="rgba(0,0,0,.25)"/><stop offset="1" stop-color="rgba(0,0,0,0)"/></radialGradient></defs><circle cx="59.78" cy="59.51" r="1.85" fill="#111"/><circle cx="56.85" cy="49.59" r="1.5" fill="#111"/><circle cx="57.87" cy="39.98" r="1.5" fill="#111"/><circle cx="64.87" cy="32.03" r="1.35" fill="#111"/><circle cx="76.30" cy="28.60" r="1.25" fill="#111"/><circle cx="87.73" cy="32.03" r="1.35" fill="#111"/><circle cx="94.73" cy="39.98" r="1.5" fill="#111"/><circle cx="95.75" cy="49.59" r="1.5" fill="#111"/><circle cx="92.82" cy="59.51" r="1.85" fill="#111"/>
<circle cx="76.3" cy="48.0" r="17" fill="url(#ks4)"/>
<circle cx="76.3" cy="47.2" r="14.7" fill="url(#kg4)"/>
<circle cx="76.3" cy="47.2" r="12.7" fill="#3c3c3c"/>
<polygon points="88.00,47.20 88.84,49.19 87.43,50.82 87.62,52.97 85.77,54.08 85.28,56.18 83.18,56.67 82.07,58.52 79.92,58.33 78.29,59.74 76.30,58.90 74.31,59.74 72.68,58.33 70.53,58.52 69.42,56.67 67.32,56.18 66.83,54.08 64.98,52.97 65.17,50.82 63.76,49.19 64.60,47.20 63.76,45.21 65.17,43.58 64.98,41.43 66.83,40.32 67.32,38.22 69.42,37.73 70.53,35.88 72.68,36.07 74.31,34.66 76.30,35.50 78.29,34.66 79.92,36.07 82.07,35.88 83.18,37.73 85.28,38.22 85.77,40.32 87.62,41.43 87.43,43.58 88.84,45.21" fill="none" stroke="#858585" stroke-width="1"/>
<polygon points="74.5,47.2 78.1,47.2 76.8,33.900000000000006 75.8,33.900000000000006" fill="#f2f2f2" transform="rotate(13 76.3 47.2)"/>
<circle cx="76.3" cy="47.2" r="1.8" fill="#f2f2f2"/></svg>
<div class="a sm" style="left:61px;top:62.5px;width:30px;text-align:center;line-height:13px">pan</div>
<div class="a btnb" style="left:56.8px;top:83.5px;width:39.8px;height:36px"></div>
<div class="a btnf" style="left:60.3px;top:86.5px;width:33.3px;height:26.5px;line-height:26.5px;color:#a44d48">M</div>
<div class="a btnb" style="left:56.8px;top:129.5px;width:39.8px;height:37.5px"></div>
<div class="a btnf" style="left:60.3px;top:134px;width:33.3px;height:26.7px;line-height:26.7px;color:#62c26c">S</div>
</div>
<div class="a box" style="left:615.70px;top:98.5px;width:106px;height:183.5px"></div>
<div class="a ttl" style="left:615.70px;top:101.6px;width:106px;line-height:17px;font-size:15.4px">instrument 6</div>
<div class="a uline" style="left:622.50px;top:119.9px;width:92px;height:1.9px"></div>
<div class="a sm" style="left:623.40px;top:124.4px;line-height:13px;font-size:11.3px">volume</div>
<div class="a" style="left:615.70px;top:98.5px;width:105px;height:183px"><div class="a tick" style="left:6.5px;top:47.00px;width:15px"></div><div class="a tick" style="left:30px;top:47.00px;width:14.5px"></div><div class="a tick" style="left:6.5px;top:53.50px;width:11px"></div><div class="a tick" style="left:35px;top:53.50px;width:9.5px"></div><div class="a tick" style="left:6.5px;top:60.00px;width:15px"></div><div class="a tick" style="left:30px;top:60.00px;width:14.5px"></div><div class="a tick" style="left:6.5px;top:66.00px;width:11px"></div><div class="a tick" style="left:35px;top:66.00px;width:9.5px"></div><div class="a tick" style="left:6.5px;top:72.50px;width:15px"></div><div class="a tick" style="left:30px;top:72.50px;width:14.5px"></div><div class="a tick" style="left:6.5px;top:79.00px;width:11px"></div><div class="a tick" style="left:35px;top:79.00px;width:9.5px"></div><div class="a tick" style="left:6.5px;top:85.00px;width:15px"></div><div class="a tick" style="left:30px;top:85.00px;width:14.5px"></div><div class="a tick" style="left:6.5px;top:91.50px;width:11px"></div><div class="a tick" style="left:35px;top:91.50px;width:9.5px"></div><div class="a tick" style="left:6.5px;top:98.00px;width:15px"></div><div class="a tick" style="left:30px;top:98.00px;width:14.5px"></div><div class="a tick" style="left:6.5px;top:104.00px;width:11px"></div><div class="a tick" style="left:35px;top:104.00px;width:9.5px"></div><div class="a tick" style="left:6.5px;top:110.50px;width:15px"></div><div class="a tick" style="left:30px;top:110.50px;width:14.5px"></div><div class="a tick" style="left:6.5px;top:117.00px;width:11px"></div><div class="a tick" style="left:35px;top:117.00px;width:9.5px"></div><div class="a tick" style="left:6.5px;top:123.00px;width:15px"></div><div class="a tick" style="left:30px;top:123.00px;width:14.5px"></div><div class="a tick" style="left:6.5px;top:129.50px;width:11px"></div><div class="a tick" style="left:35px;top:129.50px;width:9.5px"></div><div class="a tick" style="left:6.5px;top:136.00px;width:15px"></div><div class="a tick" style="left:30px;top:136.00px;width:14.5px"></div><div class="a tick" style="left:6.5px;top:142.50px;width:11px"></div><div class="a tick" style="left:35px;top:142.50px;width:9.5px"></div><div class="a tick" style="left:6.5px;top:148.50px;width:15px"></div><div class="a tick" style="left:30px;top:148.50px;width:14.5px"></div><div class="a tick" style="left:6.5px;top:155.00px;width:11px"></div><div class="a tick" style="left:35px;top:155.00px;width:9.5px"></div><div class="a tick" style="left:6.5px;top:161.50px;width:15px"></div><div class="a tick" style="left:30px;top:161.50px;width:14.5px"></div><div class="a tick" style="left:6.5px;top:167.50px;width:11px"></div><div class="a tick" style="left:35px;top:167.50px;width:9.5px"></div><div class="a tick" style="left:6.5px;top:174.00px;width:15px"></div><div class="a tick" style="left:30px;top:174.00px;width:14.5px"></div>
<div class="a" style="left:23px;top:40.5px;width:6px;height:135px;background:linear-gradient(90deg,#b4b4b4 0,#dcdcdc 20%,#cfcfcf 40%,#7a7a7a 45%,#7a7a7a 55%,#cfcfcf 60%,#dcdcdc 80%,#b4b4b4 100%);border-radius:1px"></div>
<div class="a" style="left:10.5px;top:57.80px;width:29.5px;height:13.4px;border-radius:1px;background:linear-gradient(90deg,rgba(0,0,0,.6) 0,rgba(0,0,0,0) 12%),linear-gradient(180deg,#252525 0,#161616 20%,#1c1c1c 24%,#5e5e5e 28%,#5a5a5a 36%,#1a1a1a 42%,#1a1a1a 50%,#8a8a8a 55%,#939393 63%,#252525 69%,#141414 85%,#080808 100%);box-shadow:0 1px 4px 1.5px rgba(0,0,0,.35)"></div>
<svg class="a" style="left:0;top:0" width="105" height="183"><defs><linearGradient id="kg5" x1="0.15" y1="0.1" x2="0.85" y2="0.9"><stop offset="0.4" stop-color="#0c0c0c"/><stop offset="0.72" stop-color="#606060"/><stop offset="1" stop-color="#8a8a8a"/></linearGradient><radialGradient id="ks5"><stop offset="0.8" stop-color="rgba(0,0,0,.25)"/><stop offset="1" stop-color="rgba(0,0,0,0)"/></radialGradient></defs><circle cx="59.78" cy="59.51" r="1.85" fill="#111"/><circle cx="56.85" cy="49.59" r="1.5" fill="#111"/><circle cx="57.87" cy="39.98" r="1.5" fill="#111"/><circle cx="64.87" cy="32.03" r="1.35" fill="#111"/><circle cx="76.30" cy="28.60" r="1.25" fill="#111"/><circle cx="87.73" cy="32.03" r="1.35" fill="#111"/><circle cx="94.73" cy="39.98" r="1.5" fill="#111"/><circle cx="95.75" cy="49.59" r="1.5" fill="#111"/><circle cx="92.82" cy="59.51" r="1.85" fill="#111"/>
<circle cx="76.3" cy="48.0" r="17" fill="url(#ks5)"/>
<circle cx="76.3" cy="47.2" r="14.7" fill="url(#kg5)"/>
<circle cx="76.3" cy="47.2" r="12.7" fill="#3c3c3c"/>
<polygon points="88.00,47.20 88.84,49.19 87.43,50.82 87.62,52.97 85.77,54.08 85.28,56.18 83.18,56.67 82.07,58.52 79.92,58.33 78.29,59.74 76.30,58.90 74.31,59.74 72.68,58.33 70.53,58.52 69.42,56.67 67.32,56.18 66.83,54.08 64.98,52.97 65.17,50.82 63.76,49.19 64.60,47.20 63.76,45.21 65.17,43.58 64.98,41.43 66.83,40.32 67.32,38.22 69.42,37.73 70.53,35.88 72.68,36.07 74.31,34.66 76.30,35.50 78.29,34.66 79.92,36.07 82.07,35.88 83.18,37.73 85.28,38.22 85.77,40.32 87.62,41.43 87.43,43.58 88.84,45.21" fill="none" stroke="#858585" stroke-width="1"/>
<polygon points="74.5,47.2 78.1,47.2 76.8,33.900000000000006 75.8,33.900000000000006" fill="#f2f2f2" transform="rotate(13 76.3 47.2)"/>
<circle cx="76.3" cy="47.2" r="1.8" fill="#f2f2f2"/></svg>
<div class="a sm" style="left:61px;top:62.5px;width:30px;text-align:center;line-height:13px">pan</div>
<div class="a btnb" style="left:57px;top:82px;width:39.6px;height:37.7px;background:linear-gradient(180deg,#fde4e8,#fbdce0 75%,#eea6a6 82%,#e59a9a);box-shadow:0 0 1.5px 1px rgba(235,130,130,.7)"></div>
<div class="a btnf" style="left:60.4px;top:86.2px;width:33.2px;height:26.2px;line-height:26.2px;color:#f8c4a4">M</div>
<div class="a btnb" style="left:56.8px;top:129.5px;width:39.8px;height:37.5px"></div>
<div class="a btnf" style="left:60.3px;top:134px;width:33.3px;height:26.7px;line-height:26.7px;color:#62c26c">S</div>
</div>
<div class="a box" style="left:729.00px;top:98.5px;width:106px;height:183.5px"></div>
<div class="a ttl" style="left:729.00px;top:101.6px;width:106px;line-height:17px;font-size:15.4px">instrument 7</div>
<div class="a uline" style="left:735.80px;top:119.9px;width:92px;height:1.9px"></div>
<div class="a sm" style="left:736.70px;top:124.4px;line-height:13px;font-size:11.3px">volume</div>
<div class="a" style="left:729.00px;top:98.5px;width:105px;height:183px"><div class="a tick" style="left:6.5px;top:47.00px;width:15px"></div><div class="a tick" style="left:30px;top:47.00px;width:14.5px"></div><div class="a tick" style="left:6.5px;top:53.50px;width:11px"></div><div class="a tick" style="left:35px;top:53.50px;width:9.5px"></div><div class="a tick" style="left:6.5px;top:60.00px;width:15px"></div><div class="a tick" style="left:30px;top:60.00px;width:14.5px"></div><div class="a tick" style="left:6.5px;top:66.00px;width:11px"></div><div class="a tick" style="left:35px;top:66.00px;width:9.5px"></div><div class="a tick" style="left:6.5px;top:72.50px;width:15px"></div><div class="a tick" style="left:30px;top:72.50px;width:14.5px"></div><div class="a tick" style="left:6.5px;top:79.00px;width:11px"></div><div class="a tick" style="left:35px;top:79.00px;width:9.5px"></div><div class="a tick" style="left:6.5px;top:85.00px;width:15px"></div><div class="a tick" style="left:30px;top:85.00px;width:14.5px"></div><div class="a tick" style="left:6.5px;top:91.50px;width:11px"></div><div class="a tick" style="left:35px;top:91.50px;width:9.5px"></div><div class="a tick" style="left:6.5px;top:98.00px;width:15px"></div><div class="a tick" style="left:30px;top:98.00px;width:14.5px"></div><div class="a tick" style="left:6.5px;top:104.00px;width:11px"></div><div class="a tick" style="left:35px;top:104.00px;width:9.5px"></div><div class="a tick" style="left:6.5px;top:110.50px;width:15px"></div><div class="a tick" style="left:30px;top:110.50px;width:14.5px"></div><div class="a tick" style="left:6.5px;top:117.00px;width:11px"></div><div class="a tick" style="left:35px;top:117.00px;width:9.5px"></div><div class="a tick" style="left:6.5px;top:123.00px;width:15px"></div><div class="a tick" style="left:30px;top:123.00px;width:14.5px"></div><div class="a tick" style="left:6.5px;top:129.50px;width:11px"></div><div class="a tick" style="left:35px;top:129.50px;width:9.5px"></div><div class="a tick" style="left:6.5px;top:136.00px;width:15px"></div><div class="a tick" style="left:30px;top:136.00px;width:14.5px"></div><div class="a tick" style="left:6.5px;top:142.50px;width:11px"></div><div class="a tick" style="left:35px;top:142.50px;width:9.5px"></div><div class="a tick" style="left:6.5px;top:148.50px;width:15px"></div><div class="a tick" style="left:30px;top:148.50px;width:14.5px"></div><div class="a tick" style="left:6.5px;top:155.00px;width:11px"></div><div class="a tick" style="left:35px;top:155.00px;width:9.5px"></div><div class="a tick" style="left:6.5px;top:161.50px;width:15px"></div><div class="a tick" style="left:30px;top:161.50px;width:14.5px"></div><div class="a tick" style="left:6.5px;top:167.50px;width:11px"></div><div class="a tick" style="left:35px;top:167.50px;width:9.5px"></div><div class="a tick" style="left:6.5px;top:174.00px;width:15px"></div><div class="a tick" style="left:30px;top:174.00px;width:14.5px"></div>
<div class="a" style="left:23px;top:40.5px;width:6px;height:135px;background:linear-gradient(90deg,#b4b4b4 0,#dcdcdc 20%,#cfcfcf 40%,#7a7a7a 45%,#7a7a7a 55%,#cfcfcf 60%,#dcdcdc 80%,#b4b4b4 100%);border-radius:1px"></div>
<div class="a" style="left:23.00px;top:108.50px;width:2px;height:66.60px;background:#5ba552;border-top:1px solid #a04040"></div>
<div class="a" style="left:27.00px;top:115.30px;width:2px;height:59.80px;background:#5ba552;border-top:1px solid #a04040"></div>
<div class="a" style="left:10.5px;top:51.20px;width:29.5px;height:13.4px;border-radius:1px;background:linear-gradient(90deg,rgba(0,0,0,.6) 0,rgba(0,0,0,0) 12%),linear-gradient(180deg,#252525 0,#161616 20%,#1c1c1c 24%,#5e5e5e 28%,#5a5a5a 36%,#1a1a1a 42%,#1a1a1a 50%,#8a8a8a 55%,#939393 63%,#252525 69%,#141414 85%,#080808 100%);box-shadow:0 1px 4px 1.5px rgba(0,0,0,.35)"></div>
<svg class="a" style="left:0;top:0" width="105" height="183"><defs><linearGradient id="kg6" x1="0.15" y1="0.1" x2="0.85" y2="0.9"><stop offset="0.4" stop-color="#0c0c0c"/><stop offset="0.72" stop-color="#606060"/><stop offset="1" stop-color="#8a8a8a"/></linearGradient><radialGradient id="ks6"><stop offset="0.8" stop-color="rgba(0,0,0,.25)"/><stop offset="1" stop-color="rgba(0,0,0,0)"/></radialGradient></defs><circle cx="59.78" cy="59.51" r="1.85" fill="#111"/><circle cx="56.85" cy="49.59" r="1.5" fill="#111"/><circle cx="57.87" cy="39.98" r="1.5" fill="#111"/><circle cx="64.87" cy="32.03" r="1.35" fill="#111"/><circle cx="76.30" cy="28.60" r="1.25" fill="#111"/><circle cx="87.73" cy="32.03" r="1.35" fill="#111"/><circle cx="94.73" cy="39.98" r="1.5" fill="#111"/><circle cx="95.75" cy="49.59" r="1.5" fill="#111"/><circle cx="92.82" cy="59.51" r="1.85" fill="#111"/>
<circle cx="76.3" cy="48.0" r="17" fill="url(#ks6)"/>
<circle cx="76.3" cy="47.2" r="14.7" fill="url(#kg6)"/>
<circle cx="76.3" cy="47.2" r="12.7" fill="#3c3c3c"/>
<polygon points="88.00,47.20 88.84,49.19 87.43,50.82 87.62,52.97 85.77,54.08 85.28,56.18 83.18,56.67 82.07,58.52 79.92,58.33 78.29,59.74 76.30,58.90 74.31,59.74 72.68,58.33 70.53,58.52 69.42,56.67 67.32,56.18 66.83,54.08 64.98,52.97 65.17,50.82 63.76,49.19 64.60,47.20 63.76,45.21 65.17,43.58 64.98,41.43 66.83,40.32 67.32,38.22 69.42,37.73 70.53,35.88 72.68,36.07 74.31,34.66 76.30,35.50 78.29,34.66 79.92,36.07 82.07,35.88 83.18,37.73 85.28,38.22 85.77,40.32 87.62,41.43 87.43,43.58 88.84,45.21" fill="none" stroke="#858585" stroke-width="1"/>
<polygon points="74.5,47.2 78.1,47.2 76.8,33.900000000000006 75.8,33.900000000000006" fill="#f2f2f2" transform="rotate(-24 76.3 47.2)"/>
<circle cx="76.3" cy="47.2" r="1.8" fill="#f2f2f2"/></svg>
<div class="a sm" style="left:61px;top:62.5px;width:30px;text-align:center;line-height:13px">pan</div>
<div class="a btnb" style="left:56.8px;top:83.5px;width:39.8px;height:36px"></div>
<div class="a btnf" style="left:60.3px;top:86.5px;width:33.3px;height:26.5px;line-height:26.5px;color:#a44d48">M</div>
<div class="a btnb" style="left:56.8px;top:129.5px;width:39.8px;height:37.5px"></div>
<div class="a btnf" style="left:60.3px;top:134px;width:33.3px;height:26.7px;line-height:26.7px;color:#62c26c">S</div>
</div>
<div class="a box" style="left:842.30px;top:98.5px;width:106px;height:183.5px"></div>
<div class="a ttl" style="left:842.30px;top:101.6px;width:106px;line-height:17px;font-size:15.4px">instrument 8</div>
<div class="a uline" style="left:849.10px;top:119.9px;width:92px;height:1.9px"></div>
<div class="a sm" style="left:850.00px;top:124.4px;line-height:13px;font-size:11.3px">volume</div>
<div class="a" style="left:842.30px;top:98.5px;width:105px;height:183px"><div class="a tick" style="left:6.5px;top:47.00px;width:15px"></div><div class="a tick" style="left:30px;top:47.00px;width:14.5px"></div><div class="a tick" style="left:6.5px;top:53.50px;width:11px"></div><div class="a tick" style="left:35px;top:53.50px;width:9.5px"></div><div class="a tick" style="left:6.5px;top:60.00px;width:15px"></div><div class="a tick" style="left:30px;top:60.00px;width:14.5px"></div><div class="a tick" style="left:6.5px;top:66.00px;width:11px"></div><div class="a tick" style="left:35px;top:66.00px;width:9.5px"></div><div class="a tick" style="left:6.5px;top:72.50px;width:15px"></div><div class="a tick" style="left:30px;top:72.50px;width:14.5px"></div><div class="a tick" style="left:6.5px;top:79.00px;width:11px"></div><div class="a tick" style="left:35px;top:79.00px;width:9.5px"></div><div class="a tick" style="left:6.5px;top:85.00px;width:15px"></div><div class="a tick" style="left:30px;top:85.00px;width:14.5px"></div><div class="a tick" style="left:6.5px;top:91.50px;width:11px"></div><div class="a tick" style="left:35px;top:91.50px;width:9.5px"></div><div class="a tick" style="left:6.5px;top:98.00px;width:15px"></div><div class="a tick" style="left:30px;top:98.00px;width:14.5px"></div><div class="a tick" style="left:6.5px;top:104.00px;width:11px"></div><div class="a tick" style="left:35px;top:104.00px;width:9.5px"></div><div class="a tick" style="left:6.5px;top:110.50px;width:15px"></div><div class="a tick" style="left:30px;top:110.50px;width:14.5px"></div><div class="a tick" style="left:6.5px;top:117.00px;width:11px"></div><div class="a tick" style="left:35px;top:117.00px;width:9.5px"></div><div class="a tick" style="left:6.5px;top:123.00px;width:15px"></div><div class="a tick" style="left:30px;top:123.00px;width:14.5px"></div><div class="a tick" style="left:6.5px;top:129.50px;width:11px"></div><div class="a tick" style="left:35px;top:129.50px;width:9.5px"></div><div class="a tick" style="left:6.5px;top:136.00px;width:15px"></div><div class="a tick" style="left:30px;top:136.00px;width:14.5px"></div><div class="a tick" style="left:6.5px;top:142.50px;width:11px"></div><div class="a tick" style="left:35px;top:142.50px;width:9.5px"></div><div class="a tick" style="left:6.5px;top:148.50px;width:15px"></div><div class="a tick" style="left:30px;top:148.50px;width:14.5px"></div><div class="a tick" style="left:6.5px;top:155.00px;width:11px"></div><div class="a tick" style="left:35px;top:155.00px;width:9.5px"></div><div class="a tick" style="left:6.5px;top:161.50px;width:15px"></div><div class="a tick" style="left:30px;top:161.50px;width:14.5px"></div><div class="a tick" style="left:6.5px;top:167.50px;width:11px"></div><div class="a tick" style="left:35px;top:167.50px;width:9.5px"></div><div class="a tick" style="left:6.5px;top:174.00px;width:15px"></div><div class="a tick" style="left:30px;top:174.00px;width:14.5px"></div>
<div class="a" style="left:23px;top:40.5px;width:6px;height:135px;background:linear-gradient(90deg,#b4b4b4 0,#dcdcdc 20%,#cfcfcf 40%,#7a7a7a 45%,#7a7a7a 55%,#cfcfcf 60%,#dcdcdc 80%,#b4b4b4 100%);border-radius:1px"></div>
<div class="a" style="left:10.5px;top:67.40px;width:29.5px;height:13.4px;border-radius:1px;background:linear-gradient(90deg,rgba(0,0,0,.6) 0,rgba(0,0,0,0) 12%),linear-gradient(180deg,#252525 0,#161616 20%,#1c1c1c 24%,#5e5e5e 28%,#5a5a5a 36%,#1a1a1a 42%,#1a1a1a 50%,#8a8a8a 55%,#939393 63%,#252525 69%,#141414 85%,#080808 100%);box-shadow:0 1px 4px 1.5px rgba(0,0,0,.35)"></div>
<svg class="a" style="left:0;top:0" width="105" height="183"><defs><linearGradient id="kg7" x1="0.15" y1="0.1" x2="0.85" y2="0.9"><stop offset="0.4" stop-color="#0c0c0c"/><stop offset="0.72" stop-color="#606060"/><stop offset="1" stop-color="#8a8a8a"/></linearGradient><radialGradient id="ks7"><stop offset="0.8" stop-color="rgba(0,0,0,.25)"/><stop offset="1" stop-color="rgba(0,0,0,0)"/></radialGradient></defs><circle cx="59.78" cy="59.51" r="1.85" fill="#111"/><circle cx="56.85" cy="49.59" r="1.5" fill="#111"/><circle cx="57.87" cy="39.98" r="1.5" fill="#111"/><circle cx="64.87" cy="32.03" r="1.35" fill="#111"/><circle cx="76.30" cy="28.60" r="1.25" fill="#111"/><circle cx="87.73" cy="32.03" r="1.35" fill="#111"/><circle cx="94.73" cy="39.98" r="1.5" fill="#111"/><circle cx="95.75" cy="49.59" r="1.5" fill="#111"/><circle cx="92.82" cy="59.51" r="1.85" fill="#111"/>
<circle cx="76.3" cy="48.0" r="17" fill="url(#ks7)"/>
<circle cx="76.3" cy="47.2" r="14.7" fill="url(#kg7)"/>
<circle cx="76.3" cy="47.2" r="12.7" fill="#3c3c3c"/>
<polygon points="88.00,47.20 88.84,49.19 87.43,50.82 87.62,52.97 85.77,54.08 85.28,56.18 83.18,56.67 82.07,58.52 79.92,58.33 78.29,59.74 76.30,58.90 74.31,59.74 72.68,58.33 70.53,58.52 69.42,56.67 67.32,56.18 66.83,54.08 64.98,52.97 65.17,50.82 63.76,49.19 64.60,47.20 63.76,45.21 65.17,43.58 64.98,41.43 66.83,40.32 67.32,38.22 69.42,37.73 70.53,35.88 72.68,36.07 74.31,34.66 76.30,35.50 78.29,34.66 79.92,36.07 82.07,35.88 83.18,37.73 85.28,38.22 85.77,40.32 87.62,41.43 87.43,43.58 88.84,45.21" fill="none" stroke="#858585" stroke-width="1"/>
<polygon points="74.5,47.2 78.1,47.2 76.8,33.900000000000006 75.8,33.900000000000006" fill="#f2f2f2" transform="rotate(20 76.3 47.2)"/>
<circle cx="76.3" cy="47.2" r="1.8" fill="#f2f2f2"/></svg>
<div class="a sm" style="left:61px;top:62.5px;width:30px;text-align:center;line-height:13px">pan</div>
<div class="a btnb" style="left:56.8px;top:83.5px;width:39.8px;height:36px"></div>
<div class="a btnf" style="left:60.3px;top:86.5px;width:33.3px;height:26.5px;line-height:26.5px;color:#a44d48">M</div>
<div class="a btnb" style="left:56.8px;top:129.5px;width:39.8px;height:37.5px"></div>
<div class="a btnf" style="left:60.3px;top:134px;width:33.3px;height:26.7px;line-height:26.7px;color:#62c26c">S</div>
</div>
<svg class="a" style="left:62.6px;top:310.1px" width="22" height="22"><polygon points="2.5,6 8,1.5 8,4.5 18,4.5 18,7.5 8,7.5 8,10.5" fill="#333"/></svg>
<div class="a" style="left:64.8px;top:322px;font-size:8.7px;font-weight:bold;color:#333;transform:scaleX(.7);transform-origin:left top;line-height:9px">BACK</div>
<div class="a lbl" style="left:89px;top:310.7px;line-height:20px;font-size:17.4px">to pads</div>
<svg class="a" style="left:340px;top:308px" width="190" height="28"><polygon points="7.4,13 22.6,3 22.6,24" fill="#000"/><polygon points="164.6,3 180,13.5 164.6,24" fill="#000"/></svg>
<div class="a" style="left:383.6px;top:307.2px;font-size:23.4px;font-weight:bold;color:#111;line-height:26px;white-space:nowrap">ring mod</div>
<div class="a" style="left:875px;top:308.5px;width:61px;height:35.5px;border-radius:5px;background:linear-gradient(180deg,#f0fbe8,#e2f6d8);border:1.5px solid #98e08a;box-shadow:0 0 3px 1px rgba(140,230,120,.6)"></div>
<div class="a" style="left:879.5px;top:312.2px;width:53px;height:26px;border-radius:4px;background:#3e3e3e"></div>
<svg class="a" style="left:895px;top:313px" width="28" height="24"><polygon points="3.7,3.2 23,12.5 3.7,21.7" fill="#a8e89a"/></svg>
<div class="a" style="left:57px;top:338px;width:781px;height:123.5px;background:#000;overflow:hidden"><div class="a" style="left:47.84px;top:0;width:2px;height:123.5px;background:#333"></div><div class="a" style="left:96.68px;top:0;width:2px;height:123.5px;background:#333"></div><div class="a" style="left:145.52px;top:0;width:2px;height:123.5px;background:#333"></div><div class="a" style="left:194.36px;top:0;width:2px;height:123.5px;background:#333"></div><div class="a" style="left:243.20px;top:0;width:2px;height:123.5px;background:#333"></div><div class="a" style="left:292.04px;top:0;width:2px;height:123.5px;background:#333"></div><div class="a" style="left:340.88px;top:0;width:2px;height:123.5px;background:#333"></div><div class="a" style="left:389.72px;top:0;width:2px;height:123.5px;background:#333"></div><div class="a" style="left:438.56px;top:0;width:2px;height:123.5px;background:#333"></div><div class="a" style="left:487.40px;top:0;width:2px;height:123.5px;background:#333"></div><div class="a" style="left:536.24px;top:0;width:2px;height:123.5px;background:#333"></div><div class="a" style="left:585.08px;top:0;width:2px;height:123.5px;background:#333"></div><div class="a" style="left:633.92px;top:0;width:2px;height:123.5px;background:#333"></div><div class="a" style="left:682.76px;top:0;width:2px;height:123.5px;background:#333"></div><div class="a" style="left:731.60px;top:0;width:2px;height:123.5px;background:#333"></div><div class="a" style="left:431.02px;top:0;width:7.9px;height:123.5px;background:#858585"></div><div class="a" style="left:-0.85px;top:88.80px;width:8.6px;height:37.70px;background:#62a2b2;border-left:1.7px solid #46806e;border-top:0px solid #46806e"></div><div class="a" style="left:7.29px;top:89.00px;width:8.6px;height:37.50px;background:#62a2b2;border-left:1.7px solid #46806e;border-top:0px solid #46806e"></div><div class="a" style="left:15.43px;top:88.00px;width:8.6px;height:38.50px;background:#62a2b2;border-left:1.7px solid #46806e;border-top:0px solid #46806e"></div><div class="a" style="left:23.57px;top:85.80px;width:8.6px;height:40.70px;background:#62a2b2;border-left:1.7px solid #46806e;border-top:0px solid #46806e"></div><div class="a" style="left:31.71px;top:85.00px;width:8.6px;height:41.50px;background:#62a2b2;border-left:1.7px solid #46806e;border-top:0px solid #46806e"></div><div class="a" style="left:39.85px;top:83.80px;width:8.6px;height:42.70px;background:#62a2b2;border-left:1.7px solid #46806e;border-top:0px solid #46806e"></div><div class="a" style="left:47.99px;top:84.00px;width:8.6px;height:42.50px;background:#62a2b2;border-left:1.7px solid #46806e;border-top:0px solid #46806e"></div><div class="a" style="left:56.13px;top:84.20px;width:8.6px;height:42.30px;background:#62a2b2;border-left:1.7px solid #46806e;border-top:0px solid #46806e"></div><div class="a" style="left:64.27px;top:84.20px;width:8.6px;height:42.30px;background:#62a2b2;border-left:1.7px solid #46806e;border-top:0px solid #46806e"></div><div class="a" style="left:72.41px;top:84.20px;width:8.6px;height:42.30px;background:#62a2b2;border-left:1.7px solid #46806e;border-top:0px solid #46806e"></div><div class="a" style="left:80.55px;top:84.00px;width:8.6px;height:42.50px;background:#62a2b2;border-left:1.7px solid #46806e;border-top:0px solid #46806e"></div><div class="a" style="left:88.69px;top:85.00px;width:8.6px;height:41.50px;background:#62a2b2;border-left:1.7px solid #46806e;border-top:0px solid #46806e"></div><div class="a" style="left:96.83px;top:85.20px;width:8.6px;height:41.30px;background:#62a2b2;border-left:1.7px solid #46806e;border-top:0px solid #46806e"></div><div class="a" style="left:104.97px;top:86.00px;width:8.6px;height:40.50px;background:#62a2b2;border-left:1.7px solid #46806e;border-top:0px solid #46806e"></div><div class="a" style="left:113.11px;top:83.80px;width:8.6px;height:42.70px;background:#62a2b2;border-left:1.7px solid #46806e;border-top:0px solid #46806e"></div><div class="a" style="left:121.25px;top:84.20px;width:8.6px;height:42.30px;background:#62a2b2;border-left:1.7px solid #46806e;border-top:0px solid #46806e"></div><div class="a" style="left:129.39px;top:83.00px;width:8.6px;height:43.50px;background:#62a2b2;border-left:1.7px solid #46806e;border-top:0px solid #46806e"></div><div class="a" style="left:137.53px;top:84.00px;width:8.6px;height:42.50px;background:#62a2b2;border-left:1.7px solid #46806e;border-top:0px solid #46806e"></div><div class="a" style="left:145.67px;top:84.00px;width:8.6px;height:42.50px;background:#62a2b2;border-left:1.7px solid #46806e;border-top:0px solid #46806e"></div><div class="a" style="left:153.81px;top:85.20px;width:8.6px;height:41.30px;background:#62a2b2;border-left:1.7px solid #46806e;border-top:0px solid #46806e"></div><div class="a" style="left:161.95px;top:85.20px;width:8.6px;height:41.30px;background:#62a2b2;border-left:1.7px solid #46806e;border-top:0px solid #46806e"></div><div class="a" style="left:170.09px;top:83.00px;width:8.6px;height:43.50px;background:#62a2b2;border-left:1.7px solid #46806e;border-top:0px solid #46806e"></div><div class="a" style="left:178.23px;top:81.00px;width:8.6px;height:45.50px;background:#62a2b2;border-left:1.7px solid #46806e;border-top:0px solid #46806e"></div><div class="a" style="left:186.37px;top:80.00px;width:8.6px;height:46.50px;background:#62a2b2;border-left:1.7px solid #46806e;border-top:0px solid #46806e"></div><div class="a" style="left:194.51px;top:79.20px;width:8.6px;height:47.30px;background:#62a2b2;border-left:1.7px solid #46806e;border-top:0px solid #46806e"></div><div class="a" style="left:202.65px;top:79.50px;width:8.6px;height:47.00px;background:#62a2b2;border-left:1.7px solid #46806e;border-top:0px solid #46806e"></div><div class="a" style="left:210.79px;top:79.50px;width:8.6px;height:47.00px;background:#62a2b2;border-left:1.7px solid #46806e;border-top:0px solid #46806e"></div><div class="a" style="left:218.93px;top:79.50px;width:8.6px;height:47.00px;background:#62a2b2;border-left:1.7px solid #46806e;border-top:0px solid #46806e"></div><div class="a" style="left:227.07px;top:79.50px;width:8.6px;height:47.00px;background:#62a2b2;border-left:1.7px solid #46806e;border-top:0px solid #46806e"></div><div class="a" style="left:235.21px;top:79.20px;width:8.6px;height:47.30px;background:#62a2b2;border-left:1.7px solid #46806e;border-top:0px solid #46806e"></div><div class="a" style="left:243.35px;top:80.00px;width:8.6px;height:46.50px;background:#62a2b2;border-left:1.7px solid #46806e;border-top:0px solid #46806e"></div><div class="a" style="left:251.49px;top:81.00px;width:8.6px;height:45.50px;background:#62a2b2;border-left:1.7px solid #46806e;border-top:0px solid #46806e"></div><div class="a" style="left:259.63px;top:83.00px;width:8.6px;height:43.50px;background:#62a2b2;border-left:1.7px solid #46806e;border-top:0px solid #46806e"></div><div class="a" style="left:267.77px;top:84.00px;width:8.6px;height:42.50px;background:#62a2b2;border-left:1.7px solid #46806e;border-top:0px solid #46806e"></div><div class="a" style="left:275.91px;top:84.50px;width:8.6px;height:42.00px;background:#62a2b2;border-left:1.7px solid #46806e;border-top:0px solid #46806e"></div><div class="a" style="left:284.05px;top:84.00px;width:8.6px;height:42.50px;background:#62a2b2;border-left:1.7px solid #46806e;border-top:0px solid #46806e"></div><div class="a" style="left:292.19px;top:83.00px;width:8.6px;height:43.50px;background:#62a2b2;border-left:1.7px solid #46806e;border-top:0px solid #46806e"></div><div class="a" style="left:300.33px;top:81.00px;width:8.6px;height:45.50px;background:#62a2b2;border-left:1.7px solid #46806e;border-top:0px solid #46806e"></div><div class="a" style="left:308.47px;top:80.00px;width:8.6px;height:46.50px;background:#62a2b2;border-left:1.7px solid #46806e;border-top:0px solid #46806e"></div><div class="a" style="left:316.61px;top:78.00px;width:8.6px;height:48.50px;background:#62a2b2;border-left:1.7px solid #46806e;border-top:0px solid #46806e"></div><div class="a" style="left:324.75px;top:75.20px;width:8.6px;height:51.30px;background:#62a2b2;border-left:1.7px solid #46806e;border-top:0px solid #46806e"></div><div class="a" style="left:332.89px;top:74.20px;width:8.6px;height:52.30px;background:#62a2b2;border-left:1.7px solid #46806e;border-top:0px solid #46806e"></div><div class="a" style="left:341.03px;top:74.20px;width:8.6px;height:52.30px;background:#62a2b2;border-left:1.7px solid #46806e;border-top:0px solid #46806e"></div><div class="a" style="left:349.17px;top:74.20px;width:8.6px;height:52.30px;background:#62a2b2;border-left:1.7px solid #46806e;border-top:0px solid #46806e"></div><div class="a" style="left:357.31px;top:74.20px;width:8.6px;height:52.30px;background:#62a2b2;border-left:1.7px solid #46806e;border-top:0px solid #46806e"></div><div class="a" style="left:365.45px;top:74.20px;width:8.6px;height:52.30px;background:#62a2b2;border-left:1.7px solid #46806e;border-top:0px solid #46806e"></div><div class="a" style="left:373.59px;top:75.20px;width:8.6px;height:51.30px;background:#62a2b2;border-left:1.7px solid #46806e;border-top:0px solid #46806e"></div><div class="a" style="left:381.73px;top:77.00px;width:8.6px;height:49.50px;background:#62a2b2;border-left:1.7px solid #46806e;border-top:0px solid #46806e"></div><div class="a" style="left:389.87px;top:78.00px;width:8.6px;height:48.50px;background:#62a2b2;border-left:1.7px solid #46806e;border-top:0px solid #46806e"></div><div class="a" style="left:398.01px;top:80.20px;width:8.6px;height:46.30px;background:#62a2b2;border-left:1.7px solid #46806e;border-top:0px solid #46806e"></div><div class="a" style="left:406.15px;top:81.00px;width:8.6px;height:45.50px;background:#62a2b2;border-left:1.7px solid #46806e;border-top:0px solid #46806e"></div><div class="a" style="left:414.29px;top:83.00px;width:8.6px;height:43.50px;background:#62a2b2;border-left:1.7px solid #46806e;border-top:0px solid #46806e"></div><div class="a" style="left:422.43px;top:84.00px;width:8.6px;height:42.50px;background:#62a2b2;border-left:1.7px solid #46806e;border-top:0px solid #46806e"></div><div class="a" style="left:430.57px;top:85.50px;width:8.6px;height:41.00px;background:#62a2b2;border-left:1.7px solid #46806e;border-top:0px solid #46806e"></div><div class="a" style="left:438.71px;top:86.00px;width:8.6px;height:40.50px;background:#62a2b2;border-left:1.7px solid #46806e;border-top:0px solid #46806e"></div><div class="a" style="left:446.85px;top:86.00px;width:8.6px;height:40.50px;background:#62a2b2;border-left:1.7px solid #46806e;border-top:0px solid #46806e"></div><div class="a" style="left:454.99px;top:88.00px;width:8.6px;height:38.50px;background:#62a2b2;border-left:1.7px solid #46806e;border-top:0px solid #46806e"></div><div class="a" style="left:463.13px;top:89.00px;width:8.6px;height:37.50px;background:#62a2b2;border-left:1.7px solid #46806e;border-top:0px solid #46806e"></div><div class="a" style="left:471.27px;top:90.00px;width:8.6px;height:36.50px;background:#62a2b2;border-left:1.7px solid #46806e;border-top:0px solid #46806e"></div><div class="a" style="left:479.41px;top:91.00px;width:8.6px;height:35.50px;background:#62a2b2;border-left:1.7px solid #46806e;border-top:0px solid #46806e"></div><div class="a" style="left:487.55px;top:91.00px;width:8.6px;height:35.50px;background:#62a2b2;border-left:1.7px solid #46806e;border-top:0px solid #46806e"></div><div class="a" style="left:495.69px;top:91.20px;width:8.6px;height:35.30px;background:#62a2b2;border-left:1.7px solid #46806e;border-top:0px solid #46806e"></div><div class="a" style="left:503.83px;top:91.20px;width:8.6px;height:35.30px;background:#62a2b2;border-left:1.7px solid #46806e;border-top:0px solid #46806e"></div><div class="a" style="left:511.97px;top:91.00px;width:8.6px;height:35.50px;background:#62a2b2;border-left:1.7px solid #46806e;border-top:0px solid #46806e"></div><div class="a" style="left:520.11px;top:90.00px;width:8.6px;height:36.50px;background:#62a2b2;border-left:1.7px solid #46806e;border-top:0px solid #46806e"></div><div class="a" style="left:528.25px;top:90.00px;width:8.6px;height:36.50px;background:#62a2b2;border-left:1.7px solid #46806e;border-top:0px solid #46806e"></div><div class="a" style="left:536.39px;top:89.00px;width:8.6px;height:37.50px;background:#62a2b2;border-left:1.7px solid #46806e;border-top:0px solid #46806e"></div><div class="a" style="left:544.53px;top:89.00px;width:8.6px;height:37.50px;background:#62a2b2;border-left:1.7px solid #46806e;border-top:0px solid #46806e"></div><div class="a" style="left:552.67px;top:89.00px;width:8.6px;height:37.50px;background:#62a2b2;border-left:1.7px solid #46806e;border-top:0px solid #46806e"></div><div class="a" style="left:560.81px;top:89.00px;width:8.6px;height:37.50px;background:#62a2b2;border-left:1.7px solid #46806e;border-top:0px solid #46806e"></div><div class="a" style="left:568.95px;top:89.00px;width:8.6px;height:37.50px;background:#62a2b2;border-left:1.7px solid #46806e;border-top:0px solid #46806e"></div><div class="a" style="left:577.09px;top:89.00px;width:8.6px;height:37.50px;background:#62a2b2;border-left:1.7px solid #46806e;border-top:0px solid #46806e"></div><div class="a" style="left:585.23px;top:89.00px;width:8.6px;height:37.50px;background:#62a2b2;border-left:1.7px solid #46806e;border-top:0px solid #46806e"></div><div class="a" style="left:593.37px;top:89.00px;width:8.6px;height:37.50px;background:#62a2b2;border-left:1.7px solid #46806e;border-top:0px solid #46806e"></div><div class="a" style="left:601.51px;top:89.00px;width:8.6px;height:37.50px;background:#62a2b2;border-left:1.7px solid #46806e;border-top:0px solid #46806e"></div><div class="a" style="left:609.65px;top:89.00px;width:8.6px;height:37.50px;background:#62a2b2;border-left:1.7px solid #46806e;border-top:0px solid #46806e"></div><div class="a" style="left:617.79px;top:89.00px;width:8.6px;height:37.50px;background:#62a2b2;border-left:1.7px solid #46806e;border-top:0px solid #46806e"></div><div class="a" style="left:625.93px;top:89.00px;width:8.6px;height:37.50px;background:#62a2b2;border-left:1.7px solid #46806e;border-top:0px solid #46806e"></div><div class="a" style="left:634.07px;top:88.00px;width:8.6px;height:38.50px;background:#62a2b2;border-left:1.7px solid #46806e;border-top:0px solid #46806e"></div><div class="a" style="left:642.21px;top:87.00px;width:8.6px;height:39.50px;background:#62a2b2;border-left:1.7px solid #46806e;border-top:0px solid #46806e"></div><div class="a" style="left:650.35px;top:87.00px;width:8.6px;height:39.50px;background:#62a2b2;border-left:1.7px solid #46806e;border-top:0px solid #46806e"></div><div class="a" style="left:658.49px;top:86.00px;width:8.6px;height:40.50px;background:#62a2b2;border-left:1.7px solid #46806e;border-top:0px solid #46806e"></div><div class="a" style="left:666.63px;top:86.00px;width:8.6px;height:40.50px;background:#62a2b2;border-left:1.7px solid #46806e;border-top:0px solid #46806e"></div><div class="a" style="left:674.77px;top:84.00px;width:8.6px;height:42.50px;background:#62a2b2;border-left:1.7px solid #46806e;border-top:0px solid #46806e"></div><div class="a" style="left:682.91px;top:82.80px;width:8.6px;height:43.70px;background:#62a2b2;border-left:1.7px solid #46806e;border-top:0px solid #46806e"></div><div class="a" style="left:691.05px;top:81.10px;width:8.6px;height:45.40px;background:#62a2b2;border-left:1.7px solid #46806e;border-top:0px solid #46806e"></div><div class="a" style="left:699.19px;top:80.00px;width:8.6px;height:46.50px;background:#62a2b2;border-left:1.7px solid #46806e;border-top:0px solid #46806e"></div><div class="a" style="left:707.33px;top:79.10px;width:8.6px;height:47.40px;background:#62a2b2;border-left:1.7px solid #46806e;border-top:0px solid #46806e"></div><div class="a" style="left:715.47px;top:76.90px;width:8.6px;height:49.60px;background:#62a2b2;border-left:1.7px solid #46806e;border-top:0px solid #46806e"></div><div class="a" style="left:723.61px;top:74.00px;width:8.6px;height:52.50px;background:#62a2b2;border-left:1.7px solid #46806e;border-top:0px solid #46806e"></div><div class="a" style="left:731.75px;top:71.20px;width:8.6px;height:55.30px;background:#62a2b2;border-left:1.7px solid #46806e;border-top:0px solid #46806e"></div><div class="a" style="left:739.89px;top:68.10px;width:8.6px;height:58.40px;background:#62a2b2;border-left:1.7px solid #46806e;border-top:0px solid #46806e"></div><div class="a" style="left:748.03px;top:66.30px;width:8.6px;height:60.20px;background:#62a2b2;border-left:1.7px solid #46806e;border-top:0px solid #46806e"></div><div class="a" style="left:756.17px;top:64.40px;width:8.6px;height:62.10px;background:#62a2b2;border-left:1.7px solid #46806e;border-top:0px solid #46806e"></div><div class="a" style="left:764.31px;top:63.30px;width:8.6px;height:63.20px;background:#62a2b2;border-left:1.7px solid #46806e;border-top:0px solid #46806e"></div><div class="a" style="left:772.45px;top:62.20px;width:8.6px;height:64.30px;background:#62a2b2;border-left:1.7px solid #46806e;border-top:0px solid #46806e"></div></div>
<div class="a" style="left:57px;top:468.5px;width:781px;height:124.0px;background:#000;overflow:hidden"><div class="a" style="left:47.84px;top:0;width:2px;height:124.0px;background:#333"></div><div class="a" style="left:96.68px;top:0;width:2px;height:124.0px;background:#333"></div><div class="a" style="left:145.52px;top:0;width:2px;height:124.0px;background:#333"></div><div class="a" style="left:194.36px;top:0;width:2px;height:124.0px;background:#333"></div><div class="a" style="left:243.20px;top:0;width:2px;height:124.0px;background:#333"></div><div class="a" style="left:292.04px;top:0;width:2px;height:124.0px;background:#333"></div><div class="a" style="left:340.88px;top:0;width:2px;height:124.0px;background:#333"></div><div class="a" style="left:389.72px;top:0;width:2px;height:124.0px;background:#333"></div><div class="a" style="left:438.56px;top:0;width:2px;height:124.0px;background:#333"></div><div class="a" style="left:487.40px;top:0;width:2px;height:124.0px;background:#333"></div><div class="a" style="left:536.24px;top:0;width:2px;height:124.0px;background:#333"></div><div class="a" style="left:585.08px;top:0;width:2px;height:124.0px;background:#333"></div><div class="a" style="left:633.92px;top:0;width:2px;height:124.0px;background:#333"></div><div class="a" style="left:682.76px;top:0;width:2px;height:124.0px;background:#333"></div><div class="a" style="left:731.60px;top:0;width:2px;height:124.0px;background:#333"></div><div class="a" style="left:431.02px;top:0;width:7.9px;height:124.0px;background:#858585"></div><div class="a" style="left:-0.85px;top:99.70px;width:8.6px;height:27.30px;background:#4c7f8c;border-left:1.7px solid #3c6a5e;border-top:0.8px solid #3c6a5e"></div><div class="a" style="left:7.29px;top:99.70px;width:8.6px;height:27.30px;background:#4c7f8c;border-left:1.7px solid #3c6a5e;border-top:0.8px solid #3c6a5e"></div><div class="a" style="left:15.43px;top:99.70px;width:8.6px;height:27.30px;background:#4c7f8c;border-left:1.7px solid #3c6a5e;border-top:0.8px solid #3c6a5e"></div><div class="a" style="left:23.57px;top:99.70px;width:8.6px;height:27.30px;background:#4c7f8c;border-left:1.7px solid #3c6a5e;border-top:0.8px solid #3c6a5e"></div><div class="a" style="left:31.71px;top:99.70px;width:8.6px;height:27.30px;background:#4c7f8c;border-left:1.7px solid #3c6a5e;border-top:0.8px solid #3c6a5e"></div><div class="a" style="left:39.85px;top:99.70px;width:8.6px;height:27.30px;background:#4c7f8c;border-left:1.7px solid #3c6a5e;border-top:0.8px solid #3c6a5e"></div><div class="a" style="left:47.99px;top:99.70px;width:8.6px;height:27.30px;background:#4c7f8c;border-left:1.7px solid #3c6a5e;border-top:0.8px solid #3c6a5e"></div><div class="a" style="left:56.13px;top:99.70px;width:8.6px;height:27.30px;background:#4c7f8c;border-left:1.7px solid #3c6a5e;border-top:0.8px solid #3c6a5e"></div><div class="a" style="left:64.27px;top:99.70px;width:8.6px;height:27.30px;background:#4c7f8c;border-left:1.7px solid #3c6a5e;border-top:0.8px solid #3c6a5e"></div><div class="a" style="left:72.41px;top:99.70px;width:8.6px;height:27.30px;background:#4c7f8c;border-left:1.7px solid #3c6a5e;border-top:0.8px solid #3c6a5e"></div><div class="a" style="left:80.55px;top:99.70px;width:8.6px;height:27.30px;background:#4c7f8c;border-left:1.7px solid #3c6a5e;border-top:0.8px solid #3c6a5e"></div><div class="a" style="left:88.69px;top:99.70px;width:8.6px;height:27.30px;background:#4c7f8c;border-left:1.7px solid #3c6a5e;border-top:0.8px solid #3c6a5e"></div><div class="a" style="left:96.83px;top:99.70px;width:8.6px;height:27.30px;background:#4c7f8c;border-left:1.7px solid #3c6a5e;border-top:0.8px solid #3c6a5e"></div><div class="a" style="left:104.97px;top:99.70px;width:8.6px;height:27.30px;background:#4c7f8c;border-left:1.7px solid #3c6a5e;border-top:0.8px solid #3c6a5e"></div><div class="a" style="left:113.11px;top:99.70px;width:8.6px;height:27.30px;background:#4c7f8c;border-left:1.7px solid #3c6a5e;border-top:0.8px solid #3c6a5e"></div><div class="a" style="left:121.25px;top:99.70px;width:8.6px;height:27.30px;background:#4c7f8c;border-left:1.7px solid #3c6a5e;border-top:0.8px solid #3c6a5e"></div><div class="a" style="left:129.39px;top:99.70px;width:8.6px;height:27.30px;background:#4c7f8c;border-left:1.7px solid #3c6a5e;border-top:0.8px solid #3c6a5e"></div><div class="a" style="left:137.53px;top:99.70px;width:8.6px;height:27.30px;background:#4c7f8c;border-left:1.7px solid #3c6a5e;border-top:0.8px solid #3c6a5e"></div><div class="a" style="left:145.67px;top:99.70px;width:8.6px;height:27.30px;background:#4c7f8c;border-left:1.7px solid #3c6a5e;border-top:0.8px solid #3c6a5e"></div><div class="a" style="left:153.81px;top:99.70px;width:8.6px;height:27.30px;background:#4c7f8c;border-left:1.7px solid #3c6a5e;border-top:0.8px solid #3c6a5e"></div><div class="a" style="left:161.95px;top:99.70px;width:8.6px;height:27.30px;background:#4c7f8c;border-left:1.7px solid #3c6a5e;border-top:0.8px solid #3c6a5e"></div><div class="a" style="left:170.09px;top:99.70px;width:8.6px;height:27.30px;background:#4c7f8c;border-left:1.7px solid #3c6a5e;border-top:0.8px solid #3c6a5e"></div><div class="a" style="left:178.23px;top:99.70px;width:8.6px;height:27.30px;background:#4c7f8c;border-left:1.7px solid #3c6a5e;border-top:0.8px solid #3c6a5e"></div><div class="a" style="left:186.37px;top:99.70px;width:8.6px;height:27.30px;background:#4c7f8c;border-left:1.7px solid #3c6a5e;border-top:0.8px solid #3c6a5e"></div><div class="a" style="left:194.51px;top:99.70px;width:8.6px;height:27.30px;background:#4c7f8c;border-left:1.7px solid #3c6a5e;border-top:0.8px solid #3c6a5e"></div><div class="a" style="left:202.65px;top:99.70px;width:8.6px;height:27.30px;background:#4c7f8c;border-left:1.7px solid #3c6a5e;border-top:0.8px solid #3c6a5e"></div><div class="a" style="left:210.79px;top:99.70px;width:8.6px;height:27.30px;background:#4c7f8c;border-left:1.7px solid #3c6a5e;border-top:0.8px solid #3c6a5e"></div><div class="a" style="left:218.93px;top:99.70px;width:8.6px;height:27.30px;background:#4c7f8c;border-left:1.7px solid #3c6a5e;border-top:0.8px solid #3c6a5e"></div><div class="a" style="left:227.07px;top:99.70px;width:8.6px;height:27.30px;background:#4c7f8c;border-left:1.7px solid #3c6a5e;border-top:0.8px solid #3c6a5e"></div><div class="a" style="left:235.21px;top:99.70px;width:8.6px;height:27.30px;background:#4c7f8c;border-left:1.7px solid #3c6a5e;border-top:0.8px solid #3c6a5e"></div><div class="a" style="left:243.35px;top:99.70px;width:8.6px;height:27.30px;background:#4c7f8c;border-left:1.7px solid #3c6a5e;border-top:0.8px solid #3c6a5e"></div><div class="a" style="left:251.49px;top:99.70px;width:8.6px;height:27.30px;background:#4c7f8c;border-left:1.7px solid #3c6a5e;border-top:0.8px solid #3c6a5e"></div><div class="a" style="left:259.63px;top:99.70px;width:8.6px;height:27.30px;background:#4c7f8c;border-left:1.7px solid #3c6a5e;border-top:0.8px solid #3c6a5e"></div><div class="a" style="left:267.77px;top:99.70px;width:8.6px;height:27.30px;background:#4c7f8c;border-left:1.7px solid #3c6a5e;border-top:0.8px solid #3c6a5e"></div><div class="a" style="left:275.91px;top:99.70px;width:8.6px;height:27.30px;background:#4c7f8c;border-left:1.7px solid #3c6a5e;border-top:0.8px solid #3c6a5e"></div><div class="a" style="left:284.05px;top:99.70px;width:8.6px;height:27.30px;background:#4c7f8c;border-left:1.7px solid #3c6a5e;border-top:0.8px solid #3c6a5e"></div><div class="a" style="left:292.19px;top:99.70px;width:8.6px;height:27.30px;background:#4c7f8c;border-left:1.7px solid #3c6a5e;border-top:0.8px solid #3c6a5e"></div><div class="a" style="left:300.33px;top:99.70px;width:8.6px;height:27.30px;background:#4c7f8c;border-left:1.7px solid #3c6a5e;border-top:0.8px solid #3c6a5e"></div><div class="a" style="left:308.47px;top:99.70px;width:8.6px;height:27.30px;background:#4c7f8c;border-left:1.7px solid #3c6a5e;border-top:0.8px solid #3c6a5e"></div><div class="a" style="left:316.61px;top:99.70px;width:8.6px;height:27.30px;background:#4c7f8c;border-left:1.7px solid #3c6a5e;border-top:0.8px solid #3c6a5e"></div><div class="a" style="left:324.75px;top:99.70px;width:8.6px;height:27.30px;background:#4c7f8c;border-left:1.7px solid #3c6a5e;border-top:0.8px solid #3c6a5e"></div><div class="a" style="left:332.89px;top:99.70px;width:8.6px;height:27.30px;background:#4c7f8c;border-left:1.7px solid #3c6a5e;border-top:0.8px solid #3c6a5e"></div><div class="a" style="left:341.03px;top:99.70px;width:8.6px;height:27.30px;background:#4c7f8c;border-left:1.7px solid #3c6a5e;border-top:0.8px solid #3c6a5e"></div><div class="a" style="left:349.17px;top:99.70px;width:8.6px;height:27.30px;background:#4c7f8c;border-left:1.7px solid #3c6a5e;border-top:0.8px solid #3c6a5e"></div><div class="a" style="left:357.31px;top:99.70px;width:8.6px;height:27.30px;background:#4c7f8c;border-left:1.7px solid #3c6a5e;border-top:0.8px solid #3c6a5e"></div><div class="a" style="left:365.45px;top:99.70px;width:8.6px;height:27.30px;background:#4c7f8c;border-left:1.7px solid #3c6a5e;border-top:0.8px solid #3c6a5e"></div><div class="a" style="left:373.59px;top:99.70px;width:8.6px;height:27.30px;background:#4c7f8c;border-left:1.7px solid #3c6a5e;border-top:0.8px solid #3c6a5e"></div><div class="a" style="left:381.73px;top:99.70px;width:8.6px;height:27.30px;background:#4c7f8c;border-left:1.7px solid #3c6a5e;border-top:0.8px solid #3c6a5e"></div><div class="a" style="left:389.87px;top:99.70px;width:8.6px;height:27.30px;background:#4c7f8c;border-left:1.7px solid #3c6a5e;border-top:0.8px solid #3c6a5e"></div><div class="a" style="left:398.01px;top:99.70px;width:8.6px;height:27.30px;background:#4c7f8c;border-left:1.7px solid #3c6a5e;border-top:0.8px solid #3c6a5e"></div><div class="a" style="left:406.15px;top:99.70px;width:8.6px;height:27.30px;background:#4c7f8c;border-left:1.7px solid #3c6a5e;border-top:0.8px solid #3c6a5e"></div><div class="a" style="left:414.29px;top:99.70px;width:8.6px;height:27.30px;background:#4c7f8c;border-left:1.7px solid #3c6a5e;border-top:0.8px solid #3c6a5e"></div><div class="a" style="left:422.43px;top:99.70px;width:8.6px;height:27.30px;background:#4c7f8c;border-left:1.7px solid #3c6a5e;border-top:0.8px solid #3c6a5e"></div><div class="a" style="left:430.57px;top:99.70px;width:8.6px;height:27.30px;background:#9fb9bf;border-left:1.7px solid #9fb9bf;border-top:0.8px solid #9fb9bf"></div><div class="a" style="left:438.71px;top:99.70px;width:8.6px;height:27.30px;background:#4c7f8c;border-left:1.7px solid #3c6a5e;border-top:0.8px solid #3c6a5e"></div><div class="a" style="left:446.85px;top:99.70px;width:8.6px;height:27.30px;background:#4c7f8c;border-left:1.7px solid #3c6a5e;border-top:0.8px solid #3c6a5e"></div><div class="a" style="left:454.99px;top:99.70px;width:8.6px;height:27.30px;background:#4c7f8c;border-left:1.7px solid #3c6a5e;border-top:0.8px solid #3c6a5e"></div><div class="a" style="left:463.13px;top:99.70px;width:8.6px;height:27.30px;background:#4c7f8c;border-left:1.7px solid #3c6a5e;border-top:0.8px solid #3c6a5e"></div><div class="a" style="left:471.27px;top:99.70px;width:8.6px;height:27.30px;background:#4c7f8c;border-left:1.7px solid #3c6a5e;border-top:0.8px solid #3c6a5e"></div><div class="a" style="left:479.41px;top:99.70px;width:8.6px;height:27.30px;background:#4c7f8c;border-left:1.7px solid #3c6a5e;border-top:0.8px solid #3c6a5e"></div><div class="a" style="left:487.55px;top:99.70px;width:8.6px;height:27.30px;background:#4c7f8c;border-left:1.7px solid #3c6a5e;border-top:0.8px solid #3c6a5e"></div><div class="a" style="left:495.69px;top:99.70px;width:8.6px;height:27.30px;background:#4c7f8c;border-left:1.7px solid #3c6a5e;border-top:0.8px solid #3c6a5e"></div><div class="a" style="left:503.83px;top:99.70px;width:8.6px;height:27.30px;background:#4c7f8c;border-left:1.7px solid #3c6a5e;border-top:0.8px solid #3c6a5e"></div><div class="a" style="left:511.97px;top:99.70px;width:8.6px;height:27.30px;background:#4c7f8c;border-left:1.7px solid #3c6a5e;border-top:0.8px solid #3c6a5e"></div><div class="a" style="left:520.11px;top:99.70px;width:8.6px;height:27.30px;background:#4c7f8c;border-left:1.7px solid #3c6a5e;border-top:0.8px solid #3c6a5e"></div><div class="a" style="left:528.25px;top:99.70px;width:8.6px;height:27.30px;background:#4c7f8c;border-left:1.7px solid #3c6a5e;border-top:0.8px solid #3c6a5e"></div><div class="a" style="left:536.39px;top:99.70px;width:8.6px;height:27.30px;background:#4c7f8c;border-left:1.7px solid #3c6a5e;border-top:0.8px solid #3c6a5e"></div><div class="a" style="left:544.53px;top:99.70px;width:8.6px;height:27.30px;background:#4c7f8c;border-left:1.7px solid #3c6a5e;border-top:0.8px solid #3c6a5e"></div><div class="a" style="left:552.67px;top:99.70px;width:8.6px;height:27.30px;background:#4c7f8c;border-left:1.7px solid #3c6a5e;border-top:0.8px solid #3c6a5e"></div><div class="a" style="left:560.81px;top:99.70px;width:8.6px;height:27.30px;background:#4c7f8c;border-left:1.7px solid #3c6a5e;border-top:0.8px solid #3c6a5e"></div><div class="a" style="left:568.95px;top:99.70px;width:8.6px;height:27.30px;background:#4c7f8c;border-left:1.7px solid #3c6a5e;border-top:0.8px solid #3c6a5e"></div><div class="a" style="left:577.09px;top:99.70px;width:8.6px;height:27.30px;background:#4c7f8c;border-left:1.7px solid #3c6a5e;border-top:0.8px solid #3c6a5e"></div><div class="a" style="left:585.23px;top:99.70px;width:8.6px;height:27.30px;background:#4c7f8c;border-left:1.7px solid #3c6a5e;border-top:0.8px solid #3c6a5e"></div><div class="a" style="left:593.37px;top:99.70px;width:8.6px;height:27.30px;background:#4c7f8c;border-left:1.7px solid #3c6a5e;border-top:0.8px solid #3c6a5e"></div><div class="a" style="left:601.51px;top:99.70px;width:8.6px;height:27.30px;background:#4c7f8c;border-left:1.7px solid #3c6a5e;border-top:0.8px solid #3c6a5e"></div><div class="a" style="left:609.65px;top:99.70px;width:8.6px;height:27.30px;background:#4c7f8c;border-left:1.7px solid #3c6a5e;border-top:0.8px solid #3c6a5e"></div><div class="a" style="left:617.79px;top:99.70px;width:8.6px;height:27.30px;background:#4c7f8c;border-left:1.7px solid #3c6a5e;border-top:0.8px solid #3c6a5e"></div><div class="a" style="left:625.93px;top:99.70px;width:8.6px;height:27.30px;background:#4c7f8c;border-left:1.7px solid #3c6a5e;border-top:0.8px solid #3c6a5e"></div><div class="a" style="left:634.07px;top:99.70px;width:8.6px;height:27.30px;background:#4c7f8c;border-left:1.7px solid #3c6a5e;border-top:0.8px solid #3c6a5e"></div><div class="a" style="left:642.21px;top:99.70px;width:8.6px;height:27.30px;background:#4c7f8c;border-left:1.7px solid #3c6a5e;border-top:0.8px solid #3c6a5e"></div><div class="a" style="left:650.35px;top:99.70px;width:8.6px;height:27.30px;background:#4c7f8c;border-left:1.7px solid #3c6a5e;border-top:0.8px solid #3c6a5e"></div><div class="a" style="left:658.49px;top:99.70px;width:8.6px;height:27.30px;background:#4c7f8c;border-left:1.7px solid #3c6a5e;border-top:0.8px solid #3c6a5e"></div><div class="a" style="left:666.63px;top:99.70px;width:8.6px;height:27.30px;background:#4c7f8c;border-left:1.7px solid #3c6a5e;border-top:0.8px solid #3c6a5e"></div><div class="a" style="left:674.77px;top:99.70px;width:8.6px;height:27.30px;background:#4c7f8c;border-left:1.7px solid #3c6a5e;border-top:0.8px solid #3c6a5e"></div><div class="a" style="left:682.91px;top:99.70px;width:8.6px;height:27.30px;background:#4c7f8c;border-left:1.7px solid #3c6a5e;border-top:0.8px solid #3c6a5e"></div><div class="a" style="left:691.05px;top:99.70px;width:8.6px;height:27.30px;background:#4c7f8c;border-left:1.7px solid #3c6a5e;border-top:0.8px solid #3c6a5e"></div><div class="a" style="left:699.19px;top:99.70px;width:8.6px;height:27.30px;background:#4c7f8c;border-left:1.7px solid #3c6a5e;border-top:0.8px solid #3c6a5e"></div><div class="a" style="left:707.33px;top:99.70px;width:8.6px;height:27.30px;background:#4c7f8c;border-left:1.7px solid #3c6a5e;border-top:0.8px solid #3c6a5e"></div><div class="a" style="left:715.47px;top:99.70px;width:8.6px;height:27.30px;background:#4c7f8c;border-left:1.7px solid #3c6a5e;border-top:0.8px solid #3c6a5e"></div><div class="a" style="left:723.61px;top:99.70px;width:8.6px;height:27.30px;background:#4c7f8c;border-left:1.7px solid #3c6a5e;border-top:0.8px solid #3c6a5e"></div><div class="a" style="left:731.75px;top:99.70px;width:8.6px;height:27.30px;background:#4c7f8c;border-left:1.7px solid #3c6a5e;border-top:0.8px solid #3c6a5e"></div><div class="a" style="left:739.89px;top:99.70px;width:8.6px;height:27.30px;background:#4c7f8c;border-left:1.7px solid #3c6a5e;border-top:0.8px solid #3c6a5e"></div><div class="a" style="left:748.03px;top:99.70px;width:8.6px;height:27.30px;background:#4c7f8c;border-left:1.7px solid #3c6a5e;border-top:0.8px solid #3c6a5e"></div><div class="a" style="left:756.17px;top:99.70px;width:8.6px;height:27.30px;background:#4c7f8c;border-left:1.7px solid #3c6a5e;border-top:0.8px solid #3c6a5e"></div><div class="a" style="left:764.31px;top:99.70px;width:8.6px;height:27.30px;background:#4c7f8c;border-left:1.7px solid #3c6a5e;border-top:0.8px solid #3c6a5e"></div><div class="a" style="left:772.45px;top:99.70px;width:8.6px;height:27.30px;background:#4c7f8c;border-left:1.7px solid #3c6a5e;border-top:0.8px solid #3c6a5e"></div></div>
<div class="a" style="left:57px;top:599px;width:781px;height:123.79999999999995px;background:#000;overflow:hidden"><div class="a" style="left:47.84px;top:0;width:2px;height:123.79999999999995px;background:#333"></div><div class="a" style="left:96.68px;top:0;width:2px;height:123.79999999999995px;background:#333"></div><div class="a" style="left:145.52px;top:0;width:2px;height:123.79999999999995px;background:#333"></div><div class="a" style="left:194.36px;top:0;width:2px;height:123.79999999999995px;background:#333"></div><div class="a" style="left:243.20px;top:0;width:2px;height:123.79999999999995px;background:#333"></div><div class="a" style="left:292.04px;top:0;width:2px;height:123.79999999999995px;background:#333"></div><div class="a" style="left:340.88px;top:0;width:2px;height:123.79999999999995px;background:#333"></div><div class="a" style="left:389.72px;top:0;width:2px;height:123.79999999999995px;background:#333"></div><div class="a" style="left:438.56px;top:0;width:2px;height:123.79999999999995px;background:#333"></div><div class="a" style="left:487.40px;top:0;width:2px;height:123.79999999999995px;background:#333"></div><div class="a" style="left:536.24px;top:0;width:2px;height:123.79999999999995px;background:#333"></div><div class="a" style="left:585.08px;top:0;width:2px;height:123.79999999999995px;background:#333"></div><div class="a" style="left:633.92px;top:0;width:2px;height:123.79999999999995px;background:#333"></div><div class="a" style="left:682.76px;top:0;width:2px;height:123.79999999999995px;background:#333"></div><div class="a" style="left:731.60px;top:0;width:2px;height:123.79999999999995px;background:#333"></div><div class="a" style="left:431.02px;top:0;width:7.9px;height:123.79999999999995px;background:#858585"></div><div class="a" style="left:-0.85px;top:61.80px;width:8.6px;height:65.00px;background:#33575c;border-left:1.7px solid #2c4e4a;border-top:0.8px solid #2c4e4a"></div><div class="a" style="left:7.29px;top:61.80px;width:8.6px;height:65.00px;background:#33575c;border-left:1.7px solid #2c4e4a;border-top:0.8px solid #2c4e4a"></div><div class="a" style="left:15.43px;top:61.80px;width:8.6px;height:65.00px;background:#33575c;border-left:1.7px solid #2c4e4a;border-top:0.8px solid #2c4e4a"></div><div class="a" style="left:23.57px;top:61.80px;width:8.6px;height:65.00px;background:#33575c;border-left:1.7px solid #2c4e4a;border-top:0.8px solid #2c4e4a"></div><div class="a" style="left:31.71px;top:61.80px;width:8.6px;height:65.00px;background:#33575c;border-left:1.7px solid #2c4e4a;border-top:0.8px solid #2c4e4a"></div><div class="a" style="left:39.85px;top:61.80px;width:8.6px;height:65.00px;background:#33575c;border-left:1.7px solid #2c4e4a;border-top:0.8px solid #2c4e4a"></div><div class="a" style="left:47.99px;top:61.80px;width:8.6px;height:65.00px;background:#33575c;border-left:1.7px solid #2c4e4a;border-top:0.8px solid #2c4e4a"></div><div class="a" style="left:56.13px;top:61.80px;width:8.6px;height:65.00px;background:#33575c;border-left:1.7px solid #2c4e4a;border-top:0.8px solid #2c4e4a"></div><div class="a" style="left:64.27px;top:61.80px;width:8.6px;height:65.00px;background:#33575c;border-left:1.7px solid #2c4e4a;border-top:0.8px solid #2c4e4a"></div><div class="a" style="left:72.41px;top:61.80px;width:8.6px;height:65.00px;background:#33575c;border-left:1.7px solid #2c4e4a;border-top:0.8px solid #2c4e4a"></div><div class="a" style="left:80.55px;top:61.80px;width:8.6px;height:65.00px;background:#33575c;border-left:1.7px solid #2c4e4a;border-top:0.8px solid #2c4e4a"></div><div class="a" style="left:88.69px;top:61.80px;width:8.6px;height:65.00px;background:#33575c;border-left:1.7px solid #2c4e4a;border-top:0.8px solid #2c4e4a"></div><div class="a" style="left:96.83px;top:61.80px;width:8.6px;height:65.00px;background:#33575c;border-left:1.7px solid #2c4e4a;border-top:0.8px solid #2c4e4a"></div><div class="a" style="left:104.97px;top:61.80px;width:8.6px;height:65.00px;background:#33575c;border-left:1.7px solid #2c4e4a;border-top:0.8px solid #2c4e4a"></div><div class="a" style="left:113.11px;top:61.80px;width:8.6px;height:65.00px;background:#33575c;border-left:1.7px solid #2c4e4a;border-top:0.8px solid #2c4e4a"></div><div class="a" style="left:121.25px;top:61.80px;width:8.6px;height:65.00px;background:#33575c;border-left:1.7px solid #2c4e4a;border-top:0.8px solid #2c4e4a"></div><div class="a" style="left:129.39px;top:61.80px;width:8.6px;height:65.00px;background:#33575c;border-left:1.7px solid #2c4e4a;border-top:0.8px solid #2c4e4a"></div><div class="a" style="left:137.53px;top:61.80px;width:8.6px;height:65.00px;background:#33575c;border-left:1.7px solid #2c4e4a;border-top:0.8px solid #2c4e4a"></div><div class="a" style="left:145.67px;top:61.80px;width:8.6px;height:65.00px;background:#33575c;border-left:1.7px solid #2c4e4a;border-top:0.8px solid #2c4e4a"></div><div class="a" style="left:153.81px;top:61.80px;width:8.6px;height:65.00px;background:#33575c;border-left:1.7px solid #2c4e4a;border-top:0.8px solid #2c4e4a"></div><div class="a" style="left:161.95px;top:61.80px;width:8.6px;height:65.00px;background:#33575c;border-left:1.7px solid #2c4e4a;border-top:0.8px solid #2c4e4a"></div><div class="a" style="left:170.09px;top:61.80px;width:8.6px;height:65.00px;background:#33575c;border-left:1.7px solid #2c4e4a;border-top:0.8px solid #2c4e4a"></div><div class="a" style="left:178.23px;top:61.80px;width:8.6px;height:65.00px;background:#33575c;border-left:1.7px solid #2c4e4a;border-top:0.8px solid #2c4e4a"></div><div class="a" style="left:186.37px;top:61.80px;width:8.6px;height:65.00px;background:#33575c;border-left:1.7px solid #2c4e4a;border-top:0.8px solid #2c4e4a"></div><div class="a" style="left:194.51px;top:61.80px;width:8.6px;height:65.00px;background:#33575c;border-left:1.7px solid #2c4e4a;border-top:0.8px solid #2c4e4a"></div><div class="a" style="left:202.65px;top:61.80px;width:8.6px;height:65.00px;background:#33575c;border-left:1.7px solid #2c4e4a;border-top:0.8px solid #2c4e4a"></div><div class="a" style="left:210.79px;top:61.80px;width:8.6px;height:65.00px;background:#33575c;border-left:1.7px solid #2c4e4a;border-top:0.8px solid #2c4e4a"></div><div class="a" style="left:218.93px;top:61.80px;width:8.6px;height:65.00px;background:#33575c;border-left:1.7px solid #2c4e4a;border-top:0.8px solid #2c4e4a"></div><div class="a" style="left:227.07px;top:61.80px;width:8.6px;height:65.00px;background:#33575c;border-left:1.7px solid #2c4e4a;border-top:0.8px solid #2c4e4a"></div><div class="a" style="left:235.21px;top:61.80px;width:8.6px;height:65.00px;background:#33575c;border-left:1.7px solid #2c4e4a;border-top:0.8px solid #2c4e4a"></div><div class="a" style="left:243.35px;top:61.80px;width:8.6px;height:65.00px;background:#33575c;border-left:1.7px solid #2c4e4a;border-top:0.8px solid #2c4e4a"></div><div class="a" style="left:251.49px;top:61.80px;width:8.6px;height:65.00px;background:#33575c;border-left:1.7px solid #2c4e4a;border-top:0.8px solid #2c4e4a"></div><div class="a" style="left:259.63px;top:61.80px;width:8.6px;height:65.00px;background:#33575c;border-left:1.7px solid #2c4e4a;border-top:0.8px solid #2c4e4a"></div><div class="a" style="left:267.77px;top:61.80px;width:8.6px;height:65.00px;background:#33575c;border-left:1.7px solid #2c4e4a;border-top:0.8px solid #2c4e4a"></div><div class="a" style="left:275.91px;top:61.80px;width:8.6px;height:65.00px;background:#33575c;border-left:1.7px solid #2c4e4a;border-top:0.8px solid #2c4e4a"></div><div class="a" style="left:284.05px;top:61.80px;width:8.6px;height:65.00px;background:#33575c;border-left:1.7px solid #2c4e4a;border-top:0.8px solid #2c4e4a"></div><div class="a" style="left:292.19px;top:61.80px;width:8.6px;height:65.00px;background:#33575c;border-left:1.7px solid #2c4e4a;border-top:0.8px solid #2c4e4a"></div><div class="a" style="left:300.33px;top:61.80px;width:8.6px;height:65.00px;background:#33575c;border-left:1.7px solid #2c4e4a;border-top:0.8px solid #2c4e4a"></div><div class="a" style="left:308.47px;top:61.80px;width:8.6px;height:65.00px;background:#33575c;border-left:1.7px solid #2c4e4a;border-top:0.8px solid #2c4e4a"></div><div class="a" style="left:316.61px;top:61.80px;width:8.6px;height:65.00px;background:#33575c;border-left:1.7px solid #2c4e4a;border-top:0.8px solid #2c4e4a"></div><div class="a" style="left:324.75px;top:61.80px;width:8.6px;height:65.00px;background:#33575c;border-left:1.7px solid #2c4e4a;border-top:0.8px solid #2c4e4a"></div><div class="a" style="left:332.89px;top:61.80px;width:8.6px;height:65.00px;background:#33575c;border-left:1.7px solid #2c4e4a;border-top:0.8px solid #2c4e4a"></div><div class="a" style="left:341.03px;top:61.80px;width:8.6px;height:65.00px;background:#33575c;border-left:1.7px solid #2c4e4a;border-top:0.8px solid #2c4e4a"></div><div class="a" style="left:349.17px;top:61.80px;width:8.6px;height:65.00px;background:#33575c;border-left:1.7px solid #2c4e4a;border-top:0.8px solid #2c4e4a"></div><div class="a" style="left:357.31px;top:61.80px;width:8.6px;height:65.00px;background:#33575c;border-left:1.7px solid #2c4e4a;border-top:0.8px solid #2c4e4a"></div><div class="a" style="left:365.45px;top:61.80px;width:8.6px;height:65.00px;background:#33575c;border-left:1.7px solid #2c4e4a;border-top:0.8px solid #2c4e4a"></div><div class="a" style="left:373.59px;top:61.80px;width:8.6px;height:65.00px;background:#33575c;border-left:1.7px solid #2c4e4a;border-top:0.8px solid #2c4e4a"></div><div class="a" style="left:381.73px;top:61.80px;width:8.6px;height:65.00px;background:#33575c;border-left:1.7px solid #2c4e4a;border-top:0.8px solid #2c4e4a"></div><div class="a" style="left:389.87px;top:61.80px;width:8.6px;height:65.00px;background:#33575c;border-left:1.7px solid #2c4e4a;border-top:0.8px solid #2c4e4a"></div><div class="a" style="left:398.01px;top:61.80px;width:8.6px;height:65.00px;background:#33575c;border-left:1.7px solid #2c4e4a;border-top:0.8px solid #2c4e4a"></div><div class="a" style="left:406.15px;top:61.80px;width:8.6px;height:65.00px;background:#33575c;border-left:1.7px solid #2c4e4a;border-top:0.8px solid #2c4e4a"></div><div class="a" style="left:414.29px;top:61.80px;width:8.6px;height:65.00px;background:#33575c;border-left:1.7px solid #2c4e4a;border-top:0.8px solid #2c4e4a"></div><div class="a" style="left:422.43px;top:61.80px;width:8.6px;height:65.00px;background:#33575c;border-left:1.7px solid #2c4e4a;border-top:0.8px solid #2c4e4a"></div><div class="a" style="left:430.57px;top:61.80px;width:8.6px;height:65.00px;background:#9fb9bf;border-left:1.7px solid #9fb9bf;border-top:0.8px solid #9fb9bf"></div><div class="a" style="left:438.71px;top:61.80px;width:8.6px;height:65.00px;background:#33575c;border-left:1.7px solid #2c4e4a;border-top:0.8px solid #2c4e4a"></div><div class="a" style="left:446.85px;top:61.80px;width:8.6px;height:65.00px;background:#33575c;border-left:1.7px solid #2c4e4a;border-top:0.8px solid #2c4e4a"></div><div class="a" style="left:454.99px;top:61.80px;width:8.6px;height:65.00px;background:#33575c;border-left:1.7px solid #2c4e4a;border-top:0.8px solid #2c4e4a"></div><div class="a" style="left:463.13px;top:61.80px;width:8.6px;height:65.00px;background:#33575c;border-left:1.7px solid #2c4e4a;border-top:0.8px solid #2c4e4a"></div><div class="a" style="left:471.27px;top:61.80px;width:8.6px;height:65.00px;background:#33575c;border-left:1.7px solid #2c4e4a;border-top:0.8px solid #2c4e4a"></div><div class="a" style="left:479.41px;top:61.80px;width:8.6px;height:65.00px;background:#33575c;border-left:1.7px solid #2c4e4a;border-top:0.8px solid #2c4e4a"></div><div class="a" style="left:487.55px;top:61.80px;width:8.6px;height:65.00px;background:#33575c;border-left:1.7px solid #2c4e4a;border-top:0.8px solid #2c4e4a"></div><div class="a" style="left:495.69px;top:61.80px;width:8.6px;height:65.00px;background:#33575c;border-left:1.7px solid #2c4e4a;border-top:0.8px solid #2c4e4a"></div><div class="a" style="left:503.83px;top:61.80px;width:8.6px;height:65.00px;background:#33575c;border-left:1.7px solid #2c4e4a;border-top:0.8px solid #2c4e4a"></div><div class="a" style="left:511.97px;top:61.80px;width:8.6px;height:65.00px;background:#33575c;border-left:1.7px solid #2c4e4a;border-top:0.8px solid #2c4e4a"></div><div class="a" style="left:520.11px;top:61.80px;width:8.6px;height:65.00px;background:#33575c;border-left:1.7px solid #2c4e4a;border-top:0.8px solid #2c4e4a"></div><div class="a" style="left:528.25px;top:61.80px;width:8.6px;height:65.00px;background:#33575c;border-left:1.7px solid #2c4e4a;border-top:0.8px solid #2c4e4a"></div><div class="a" style="left:536.39px;top:61.80px;width:8.6px;height:65.00px;background:#33575c;border-left:1.7px solid #2c4e4a;border-top:0.8px solid #2c4e4a"></div><div class="a" style="left:544.53px;top:61.80px;width:8.6px;height:65.00px;background:#33575c;border-left:1.7px solid #2c4e4a;border-top:0.8px solid #2c4e4a"></div><div class="a" style="left:552.67px;top:61.80px;width:8.6px;height:65.00px;background:#33575c;border-left:1.7px solid #2c4e4a;border-top:0.8px solid #2c4e4a"></div><div class="a" style="left:560.81px;top:61.80px;width:8.6px;height:65.00px;background:#33575c;border-left:1.7px solid #2c4e4a;border-top:0.8px solid #2c4e4a"></div><div class="a" style="left:568.95px;top:61.80px;width:8.6px;height:65.00px;background:#33575c;border-left:1.7px solid #2c4e4a;border-top:0.8px solid #2c4e4a"></div><div class="a" style="left:577.09px;top:61.80px;width:8.6px;height:65.00px;background:#33575c;border-left:1.7px solid #2c4e4a;border-top:0.8px solid #2c4e4a"></div><div class="a" style="left:585.23px;top:61.80px;width:8.6px;height:65.00px;background:#33575c;border-left:1.7px solid #2c4e4a;border-top:0.8px solid #2c4e4a"></div><div class="a" style="left:593.37px;top:61.80px;width:8.6px;height:65.00px;background:#33575c;border-left:1.7px solid #2c4e4a;border-top:0.8px solid #2c4e4a"></div><div class="a" style="left:601.51px;top:61.80px;width:8.6px;height:65.00px;background:#33575c;border-left:1.7px solid #2c4e4a;border-top:0.8px solid #2c4e4a"></div><div class="a" style="left:609.65px;top:61.80px;width:8.6px;height:65.00px;background:#33575c;border-left:1.7px solid #2c4e4a;border-top:0.8px solid #2c4e4a"></div><div class="a" style="left:617.79px;top:61.80px;width:8.6px;height:65.00px;background:#33575c;border-left:1.7px solid #2c4e4a;border-top:0.8px solid #2c4e4a"></div><div class="a" style="left:625.93px;top:61.80px;width:8.6px;height:65.00px;background:#33575c;border-left:1.7px solid #2c4e4a;border-top:0.8px solid #2c4e4a"></div><div class="a" style="left:634.07px;top:61.80px;width:8.6px;height:65.00px;background:#33575c;border-left:1.7px solid #2c4e4a;border-top:0.8px solid #2c4e4a"></div><div class="a" style="left:642.21px;top:61.80px;width:8.6px;height:65.00px;background:#33575c;border-left:1.7px solid #2c4e4a;border-top:0.8px solid #2c4e4a"></div><div class="a" style="left:650.35px;top:61.80px;width:8.6px;height:65.00px;background:#33575c;border-left:1.7px solid #2c4e4a;border-top:0.8px solid #2c4e4a"></div><div class="a" style="left:658.49px;top:61.80px;width:8.6px;height:65.00px;background:#33575c;border-left:1.7px solid #2c4e4a;border-top:0.8px solid #2c4e4a"></div><div class="a" style="left:666.63px;top:61.80px;width:8.6px;height:65.00px;background:#33575c;border-left:1.7px solid #2c4e4a;border-top:0.8px solid #2c4e4a"></div><div class="a" style="left:674.77px;top:61.80px;width:8.6px;height:65.00px;background:#33575c;border-left:1.7px solid #2c4e4a;border-top:0.8px solid #2c4e4a"></div><div class="a" style="left:682.91px;top:61.80px;width:8.6px;height:65.00px;background:#33575c;border-left:1.7px solid #2c4e4a;border-top:0.8px solid #2c4e4a"></div><div class="a" style="left:691.05px;top:61.80px;width:8.6px;height:65.00px;background:#33575c;border-left:1.7px solid #2c4e4a;border-top:0.8px solid #2c4e4a"></div><div class="a" style="left:699.19px;top:61.80px;width:8.6px;height:65.00px;background:#33575c;border-left:1.7px solid #2c4e4a;border-top:0.8px solid #2c4e4a"></div><div class="a" style="left:707.33px;top:61.80px;width:8.6px;height:65.00px;background:#33575c;border-left:1.7px solid #2c4e4a;border-top:0.8px solid #2c4e4a"></div><div class="a" style="left:715.47px;top:61.80px;width:8.6px;height:65.00px;background:#33575c;border-left:1.7px solid #2c4e4a;border-top:0.8px solid #2c4e4a"></div><div class="a" style="left:723.61px;top:61.80px;width:8.6px;height:65.00px;background:#33575c;border-left:1.7px solid #2c4e4a;border-top:0.8px solid #2c4e4a"></div><div class="a" style="left:731.75px;top:61.80px;width:8.6px;height:65.00px;background:#33575c;border-left:1.7px solid #2c4e4a;border-top:0.8px solid #2c4e4a"></div><div class="a" style="left:739.89px;top:61.80px;width:8.6px;height:65.00px;background:#33575c;border-left:1.7px solid #2c4e4a;border-top:0.8px solid #2c4e4a"></div><div class="a" style="left:748.03px;top:61.80px;width:8.6px;height:65.00px;background:#33575c;border-left:1.7px solid #2c4e4a;border-top:0.8px solid #2c4e4a"></div><div class="a" style="left:756.17px;top:61.80px;width:8.6px;height:65.00px;background:#33575c;border-left:1.7px solid #2c4e4a;border-top:0.8px solid #2c4e4a"></div><div class="a" style="left:764.31px;top:61.80px;width:8.6px;height:65.00px;background:#33575c;border-left:1.7px solid #2c4e4a;border-top:0.8px solid #2c4e4a"></div><div class="a" style="left:772.45px;top:61.80px;width:8.6px;height:65.00px;background:#33575c;border-left:1.7px solid #2c4e4a;border-top:0.8px solid #2c4e4a"></div></div>
<div class="a" style="left:851.4px;width:100px;text-align:center;font-weight:bold;font-size:19px;color:#111;top:352.8px;line-height:22px;white-space:nowrap;letter-spacing:.1px">dry/wet</div>
<svg class="a" style="left:845px;top:385px" width="30" height="30"><polygon points="6,14 12.5,7.8 12.5,20.2" fill="#788bae"/><path d="M12,13.75 H19 A5.5,5.5 0 0 1 19,24.75 H9.5" fill="none" stroke="#788bae" stroke-width="5.5"/></svg>
<div class="a lbl" style="left:883px;top:393.2px;line-height:20px;font-size:17.3px">reset</div>
<div class="a" style="left:849.5px;top:429px;width:23.5px;height:24.5px;background:#05090b"></div>
<div class="a lbl" style="left:883px;top:432.0px;line-height:20px;font-size:17.3px">follow</div>
<div class="a" style="left:851.4px;width:100px;text-align:center;font-weight:bold;font-size:19px;color:#111;top:483.8px;line-height:22px;white-space:nowrap;letter-spacing:.1px">rate</div>
<svg class="a" style="left:845px;top:516px" width="30" height="30"><polygon points="6,14 12.5,7.8 12.5,20.2" fill="#788bae"/><path d="M12,13.75 H19 A5.5,5.5 0 0 1 19,24.75 H9.5" fill="none" stroke="#788bae" stroke-width="5.5"/></svg>
<div class="a lbl" style="left:883px;top:524.2px;line-height:20px;font-size:17.3px">reset</div>
<div class="a" style="left:849.5px;top:560px;width:23.5px;height:24.5px;background:#05090b"></div>
<div class="a lbl" style="left:883px;top:563.2px;line-height:20px;font-size:17.3px">follow</div>
<div class="a" style="left:851.4px;width:100px;text-align:center;font-weight:bold;font-size:19px;color:#111;top:614.8px;line-height:22px;white-space:nowrap;letter-spacing:.1px">depth</div>
<svg class="a" style="left:845px;top:647px" width="30" height="30"><polygon points="6,14 12.5,7.8 12.5,20.2" fill="#788bae"/><path d="M12,13.75 H19 A5.5,5.5 0 0 1 19,24.75 H9.5" fill="none" stroke="#788bae" stroke-width="5.5"/></svg>
<div class="a lbl" style="left:883px;top:655.9000000000001px;line-height:20px;font-size:17.3px">reset</div>
<div class="a" style="left:849.5px;top:691px;width:23.5px;height:24.5px;background:#05090b"></div>
<div class="a lbl" style="left:883px;top:695.6px;line-height:20px;font-size:17.3px">follow</div>
</body></html>
